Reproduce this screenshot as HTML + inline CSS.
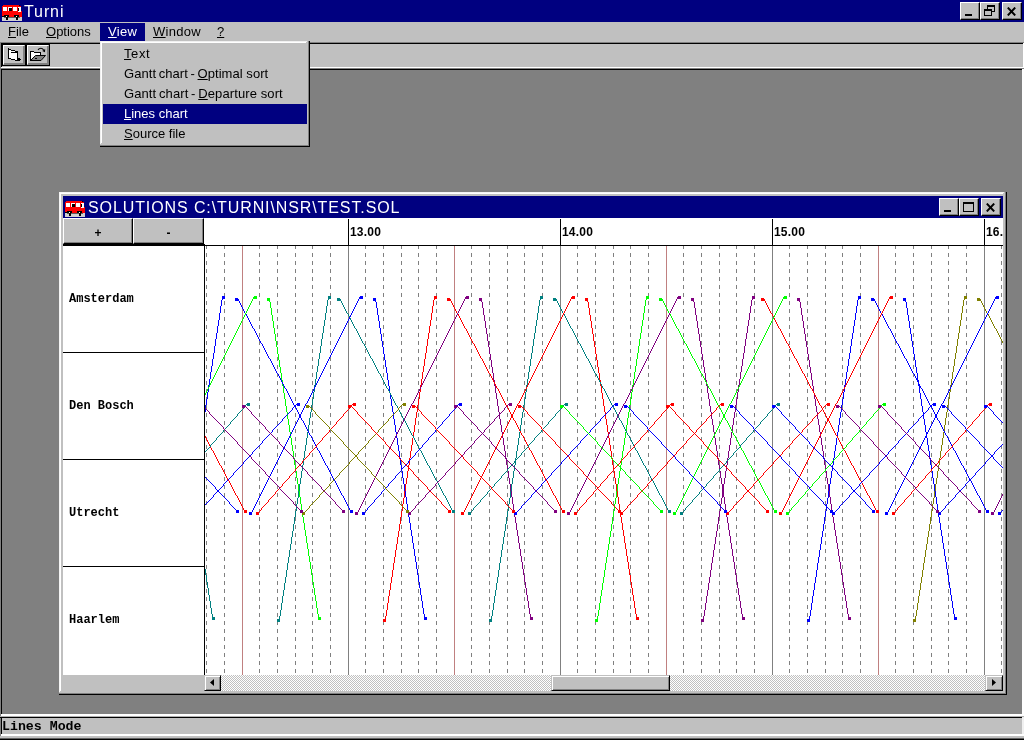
<!DOCTYPE html>
<html><head><meta charset="utf-8"><title>Turni</title>
<style>
html,body{margin:0;padding:0}
body{width:1024px;height:740px;position:relative;overflow:hidden;background:#808080;font-family:"Liberation Sans",sans-serif;font-size:13px;color:#000}
div,i,span,svg{position:absolute;display:block}
.title,.mi,.dd,.st,.hl,.pb,.mono{will-change:transform}
u{text-decoration:underline;text-decoration-thickness:1px;text-underline-offset:1px;text-decoration-skip-ink:none}
.navy{background:#000080}
.face{background:#c0c0c0}
.cb{width:20px;height:18px;background:#c0c0c0;box-sizing:border-box;border:1px solid;border-color:#fff #000 #000 #fff;box-shadow:inset -1px -1px 0 #808080}
.cb i{position:absolute}
.bus{position:absolute}
.title{color:#fff;font-size:16px;line-height:22px;white-space:nowrap}
.mi{top:22px;height:20px;line-height:19px;font-size:13px;white-space:nowrap}
.dd{left:124px;font-size:13px;line-height:20px;height:20px;white-space:nowrap}
.tb{width:24px;height:22px;box-sizing:border-box;border:1px solid #000;background:#c0c0c0}
.tb:before{content:"";position:absolute;left:0;top:0;right:0;bottom:0;border:1px solid;border-color:#fff #808080 #808080 #fff;box-shadow:inset -1px -1px 0 #808080}
.st{left:69px;font-family:"Liberation Mono",monospace;font-weight:bold;font-size:12px;line-height:14px;white-space:nowrap}
.hl{font-weight:bold;font-size:12px;line-height:14px;top:225px;letter-spacing:0.2px}
.pb{top:218px;height:26px;box-sizing:border-box;background:#c0c0c0;border:1px solid;border-color:#fff #000 #000 #fff;box-shadow:inset -1px -1px 0 #808080;text-align:center;font-weight:bold;font-size:12px;line-height:28px}
.sb{top:675px;height:16px;width:17px;box-sizing:border-box;background:#c0c0c0;border:1px solid;border-color:#c0c0c0 #000 #000 #c0c0c0;box-shadow:inset 1px 1px 0 #fff, inset -1px -1px 0 #808080}
</style></head><body>

<!-- main title bar -->
<div class="navy" style="left:0;top:0;width:1024px;height:22px"></div>
<div style="left:2px;top:5px;width:20px;height:16px"><svg class="bus" width="20" height="16" viewBox="0 0 20 16" shape-rendering="crispEdges">
<rect x="0" y="12" width="20" height="4" fill="#d0d0d0"/>
<rect x="1" y="0" width="17" height="2" fill="#ff0000"/>
<rect x="0" y="1" width="19" height="6" fill="#ff0000"/>
<rect x="0" y="6" width="20" height="6" fill="#ff0000"/>
<rect x="1" y="2" width="4" height="4" fill="#fff"/>
<rect x="6" y="2" width="4" height="4" fill="#fff"/>
<rect x="11" y="2" width="4" height="4" fill="#fff"/>
<rect x="16" y="2" width="3" height="5" fill="#fff"/>
<rect x="7" y="3" width="3" height="3" fill="#000"/>
<rect x="16" y="3" width="1" height="3" fill="#000"/>
<rect x="17" y="0" width="1" height="1" fill="#000"/>
<rect x="2" y="10" width="5" height="2" fill="#000"/>
<rect x="12" y="10" width="5" height="2" fill="#000"/>
<rect x="0" y="11" width="2" height="1" fill="#000"/>
<rect x="4" y="11" width="1" height="1" fill="#fff"/>
<rect x="14" y="11" width="1" height="1" fill="#fff"/>
<rect x="4" y="12" width="2" height="3" fill="#000"/>
<rect x="14" y="12" width="2" height="3" fill="#000"/>
<rect x="2" y="12" width="16" height="1" fill="#000" opacity="0.55"/>
</svg></div>
<div class="title" style="left:24px;top:1px;letter-spacing:0.9px">Turni</div>
<div class="cb" style="left:960px;top:2px"><i style="left:4px;top:11px;width:7px;height:2px;background:#000"></i></div>
<div class="cb" style="left:980px;top:2px"><i style="left:6px;top:2px;width:8px;height:7px;border:1px solid #000;border-top-width:2px;box-sizing:border-box"></i><i style="left:3px;top:6px;width:8px;height:7px;border:1px solid #000;border-top-width:2px;box-sizing:border-box;background:#c0c0c0"></i></div>
<div class="cb" style="left:1002px;top:2px"><svg style="position:absolute;left:4px;top:4px" width="9" height="9" viewBox="0 0 9 9"><path d="M0.8 0.6 L8.2 8.4 M8.2 0.6 L0.8 8.4" stroke="#000" stroke-width="2" fill="none"/></svg></div>

<!-- menu bar -->
<div class="face" style="left:0;top:22px;width:1024px;height:20px"></div>
<div class="mi" style="left:8px"><u>F</u>ile</div>
<div class="mi" style="left:46px"><u>O</u>ptions</div>
<div class="navy" style="left:100px;top:23px;width:45px;height:18px"></div>
<div class="mi" style="left:108px;color:#fff;letter-spacing:0.3px"><u>V</u>iew</div>
<div class="mi" style="left:153px;letter-spacing:0.3px"><u>W</u>indow</div>
<div class="mi" style="left:217px"><u>?</u></div>

<!-- toolbar -->
<div style="left:0;top:42px;width:1024px;height:1px;background:#808080"></div>
<div style="left:0;top:43px;width:1023px;height:1px;background:#000"></div>
<div class="face" style="left:2px;top:44px;width:1021px;height:23px"></div>
<div style="left:1px;top:67px;width:1023px;height:1px;background:#fff"></div>
<div style="left:1023px;top:43px;width:1px;height:25px;background:#fff"></div>
<div style="left:0;top:68px;width:1024px;height:1px;background:#808080"></div>
<div style="left:1px;top:69px;width:1022px;height:1px;background:#000"></div>
<div style="left:0;top:42px;width:1px;height:697px;background:#808080"></div>
<div style="left:1px;top:43px;width:1px;height:24px;background:#000"></div>
<div style="left:1px;top:69px;width:1px;height:645px;background:#000"></div>
<div style="left:1022px;top:69px;width:2px;height:647px;background:#fff"></div>
<div class="tb" style="left:2px;top:44px"></div>
<div class="tb" style="left:26px;top:44px"></div>
<svg style="left:0;top:44px" width="52" height="24" viewBox="0 44 52 24">
<g shape-rendering="crispEdges">
<polygon points="9,50 17,52 17,60 15,60 11,59 9,58" fill="#fff"/>
<rect x="8" y="48" width="1" height="11"/>
<rect x="9" y="49" width="2" height="1"/>
<rect x="11" y="50" width="4" height="1"/>
<rect x="15" y="51" width="3" height="1"/>
<rect x="11" y="52" width="6" height="1"/>
<rect x="17" y="51" width="1" height="10"/>
<rect x="8" y="58" width="3" height="1"/>
<rect x="11" y="59" width="4" height="1"/>
<rect x="15" y="60" width="3" height="1"/>
<rect x="18" y="58" width="2" height="2"/>
<rect x="20" y="59" width="1" height="1"/>
<rect x="18" y="60" width="2" height="1"/>
<polygon points="31,52 34,52 34,53 40,53 40,55 35,55 31,59.5" fill="#fff"/>
<rect x="30" y="51" width="4" height="1"/>
<rect x="30" y="51" width="1" height="10"/>
<rect x="34" y="52" width="6" height="1"/>
<rect x="40" y="52" width="1" height="3"/>
</g>
<polygon points="35.5,55.5 45.5,55.5 41,60.5 30.5,60.5" fill="#808080" stroke="#000" stroke-width="1"/>
<rect x="35" y="58" width="2" height="1" shape-rendering="crispEdges"/>
<path d="M38 49.7 Q41 46.8 43.6 49.8" stroke="#000" stroke-width="1.2" fill="none"/>
<polygon points="42.2,50.9 45.2,48.9 45,52.2" fill="#000"/>
</svg>

<!-- status bar -->
<div style="left:1px;top:714px;width:1023px;height:2px;background:#fff"></div>
<div style="left:0;top:716px;width:1024px;height:1px;background:#b0b0b0"></div>
<div style="left:0;top:717px;width:1022px;height:1px;background:#000"></div>
<div class="face" style="left:2px;top:718px;width:1020px;height:16px"></div>
<div style="left:1px;top:717px;width:1px;height:18px;background:#000"></div>
<div style="left:1022px;top:717px;width:2px;height:19px;background:#f0f0f0"></div>
<div style="left:1px;top:734px;width:1023px;height:2px;background:#fff"></div>
<div style="left:0;top:736px;width:1024px;height:2px;background:#c0c0c0"></div>
<div style="left:0;top:738px;width:1024px;height:1px;background:#606060"></div>
<div style="left:0;top:739px;width:1024px;height:1px;background:#000"></div>
<div class="mono" style="left:2px;top:719px;font-family:'Liberation Mono',monospace;font-weight:bold;font-size:13.25px;line-height:16px;white-space:nowrap">Lines Mode</div>

<!-- child window -->
<div style="left:59px;top:192px;width:948px;height:503px;background:#000"></div>
<div style="left:59px;top:192px;width:947px;height:502px;background:#808080"></div>
<div class="face" style="left:59px;top:192px;width:946px;height:501px"></div>
<div style="left:59px;top:192px;width:945px;height:1px;background:#f4f4f4"></div>
<div style="left:59px;top:192px;width:1px;height:500px;background:#f4f4f4"></div>
<div style="left:60px;top:193px;width:943px;height:1px;background:#fff"></div>
<div style="left:60px;top:193px;width:1px;height:498px;background:#fff"></div>
<div class="navy" style="left:63px;top:196px;width:940px;height:22px"></div>
<div style="left:65px;top:201px;width:20px;height:16px"><svg class="bus" width="20" height="16" viewBox="0 0 20 16" shape-rendering="crispEdges">
<rect x="0" y="12" width="20" height="4" fill="#d0d0d0"/>
<rect x="1" y="0" width="17" height="2" fill="#ff0000"/>
<rect x="0" y="1" width="19" height="6" fill="#ff0000"/>
<rect x="0" y="6" width="20" height="6" fill="#ff0000"/>
<rect x="1" y="2" width="4" height="4" fill="#fff"/>
<rect x="6" y="2" width="4" height="4" fill="#fff"/>
<rect x="11" y="2" width="4" height="4" fill="#fff"/>
<rect x="16" y="2" width="3" height="5" fill="#fff"/>
<rect x="7" y="3" width="3" height="3" fill="#000"/>
<rect x="16" y="3" width="1" height="3" fill="#000"/>
<rect x="17" y="0" width="1" height="1" fill="#000"/>
<rect x="2" y="10" width="5" height="2" fill="#000"/>
<rect x="12" y="10" width="5" height="2" fill="#000"/>
<rect x="0" y="11" width="2" height="1" fill="#000"/>
<rect x="4" y="11" width="1" height="1" fill="#fff"/>
<rect x="14" y="11" width="1" height="1" fill="#fff"/>
<rect x="4" y="12" width="2" height="3" fill="#000"/>
<rect x="14" y="12" width="2" height="3" fill="#000"/>
<rect x="2" y="12" width="16" height="1" fill="#000" opacity="0.55"/>
</svg></div>
<div class="title" style="left:88px;top:197px;letter-spacing:0.9px" id="ct">SOLUTIONS C:\TURNI\NSR\TEST.SOL</div>
<div class="cb" style="left:939px;top:198px"><i style="left:4px;top:11px;width:7px;height:2px;background:#000"></i></div>
<div class="cb" style="left:959px;top:198px"><i style="left:3px;top:3px;width:11px;height:10px;border:1px solid #000;border-top-width:2px;box-sizing:border-box"></i></div>
<div class="cb" style="left:981px;top:198px"><svg style="position:absolute;left:4px;top:4px" width="9" height="9" viewBox="0 0 9 9"><path d="M0.8 0.6 L8.2 8.4 M8.2 0.6 L0.8 8.4" stroke="#000" stroke-width="2" fill="none"/></svg></div>
<!-- client -->
<div style="left:63px;top:218px;width:940px;height:457px;background:#fff"></div>
<div class="pb" style="left:63px;width:70px">+</div>
<div class="pb" style="left:133px;width:71px">-</div>
<div style="left:63px;top:244px;width:142px;height:2px;background:#000"></div>
<div style="left:204px;top:245px;width:799px;height:1px;background:#000"></div>
<div style="left:204px;top:244px;width:1px;height:431px;background:#000"></div>
<div style="left:63px;top:352px;width:141px;height:1px;background:#000"></div>
<div style="left:63px;top:459px;width:141px;height:1px;background:#000"></div>
<div style="left:63px;top:566px;width:141px;height:1px;background:#000"></div>
<div class="st" style="top:292px">Amsterdam</div>
<div class="st" style="top:399px">Den Bosch</div>
<div class="st" style="top:506px">Utrecht</div>
<div class="st" style="top:613px">Haarlem</div>
<!-- hour ticks & labels -->
<div style="left:348px;top:219px;width:1px;height:27px;background:#000"></div>
<div style="left:560px;top:219px;width:1px;height:27px;background:#000"></div>
<div style="left:772px;top:219px;width:1px;height:27px;background:#000"></div>
<div style="left:984px;top:219px;width:1px;height:27px;background:#000"></div>
<div class="hl" style="left:350px">13.00</div>
<div class="hl" style="left:562px">14.00</div>
<div class="hl" style="left:774px">15.00</div>
<div class="hl" style="left:986px;width:17px;overflow:hidden">16.00</div>
<svg class="chart" style="position:absolute;left:205px;top:246px" width="798" height="429" viewBox="205 246 798 429" shape-rendering="crispEdges">
<line x1="206.5" y1="245" x2="206.5" y2="675" stroke="#808080" stroke-width="1" stroke-dasharray="4 4"/>
<line x1="224.5" y1="245" x2="224.5" y2="675" stroke="#808080" stroke-width="1" stroke-dasharray="4 4"/>
<rect x="242" y="246" width="1" height="429" fill="#c08080"/>
<line x1="259.5" y1="245" x2="259.5" y2="675" stroke="#808080" stroke-width="1" stroke-dasharray="4 4"/>
<line x1="277.5" y1="245" x2="277.5" y2="675" stroke="#808080" stroke-width="1" stroke-dasharray="4 4"/>
<line x1="295.5" y1="245" x2="295.5" y2="675" stroke="#808080" stroke-width="1" stroke-dasharray="4 4"/>
<line x1="312.5" y1="245" x2="312.5" y2="675" stroke="#808080" stroke-width="1" stroke-dasharray="4 4"/>
<line x1="330.5" y1="245" x2="330.5" y2="675" stroke="#808080" stroke-width="1" stroke-dasharray="4 4"/>
<rect x="348" y="246" width="1" height="429" fill="#808080"/>
<line x1="365.5" y1="245" x2="365.5" y2="675" stroke="#808080" stroke-width="1" stroke-dasharray="4 4"/>
<line x1="383.5" y1="245" x2="383.5" y2="675" stroke="#808080" stroke-width="1" stroke-dasharray="4 4"/>
<line x1="401.5" y1="245" x2="401.5" y2="675" stroke="#808080" stroke-width="1" stroke-dasharray="4 4"/>
<line x1="418.5" y1="245" x2="418.5" y2="675" stroke="#808080" stroke-width="1" stroke-dasharray="4 4"/>
<line x1="436.5" y1="245" x2="436.5" y2="675" stroke="#808080" stroke-width="1" stroke-dasharray="4 4"/>
<rect x="454" y="246" width="1" height="429" fill="#c08080"/>
<line x1="471.5" y1="245" x2="471.5" y2="675" stroke="#808080" stroke-width="1" stroke-dasharray="4 4"/>
<line x1="489.5" y1="245" x2="489.5" y2="675" stroke="#808080" stroke-width="1" stroke-dasharray="4 4"/>
<line x1="507.5" y1="245" x2="507.5" y2="675" stroke="#808080" stroke-width="1" stroke-dasharray="4 4"/>
<line x1="524.5" y1="245" x2="524.5" y2="675" stroke="#808080" stroke-width="1" stroke-dasharray="4 4"/>
<line x1="542.5" y1="245" x2="542.5" y2="675" stroke="#808080" stroke-width="1" stroke-dasharray="4 4"/>
<rect x="560" y="246" width="1" height="429" fill="#808080"/>
<line x1="577.5" y1="245" x2="577.5" y2="675" stroke="#808080" stroke-width="1" stroke-dasharray="4 4"/>
<line x1="595.5" y1="245" x2="595.5" y2="675" stroke="#808080" stroke-width="1" stroke-dasharray="4 4"/>
<line x1="613.5" y1="245" x2="613.5" y2="675" stroke="#808080" stroke-width="1" stroke-dasharray="4 4"/>
<line x1="630.5" y1="245" x2="630.5" y2="675" stroke="#808080" stroke-width="1" stroke-dasharray="4 4"/>
<line x1="648.5" y1="245" x2="648.5" y2="675" stroke="#808080" stroke-width="1" stroke-dasharray="4 4"/>
<rect x="666" y="246" width="1" height="429" fill="#c08080"/>
<line x1="683.5" y1="245" x2="683.5" y2="675" stroke="#808080" stroke-width="1" stroke-dasharray="4 4"/>
<line x1="701.5" y1="245" x2="701.5" y2="675" stroke="#808080" stroke-width="1" stroke-dasharray="4 4"/>
<line x1="719.5" y1="245" x2="719.5" y2="675" stroke="#808080" stroke-width="1" stroke-dasharray="4 4"/>
<line x1="736.5" y1="245" x2="736.5" y2="675" stroke="#808080" stroke-width="1" stroke-dasharray="4 4"/>
<line x1="754.5" y1="245" x2="754.5" y2="675" stroke="#808080" stroke-width="1" stroke-dasharray="4 4"/>
<rect x="772" y="246" width="1" height="429" fill="#808080"/>
<line x1="789.5" y1="245" x2="789.5" y2="675" stroke="#808080" stroke-width="1" stroke-dasharray="4 4"/>
<line x1="807.5" y1="245" x2="807.5" y2="675" stroke="#808080" stroke-width="1" stroke-dasharray="4 4"/>
<line x1="825.5" y1="245" x2="825.5" y2="675" stroke="#808080" stroke-width="1" stroke-dasharray="4 4"/>
<line x1="842.5" y1="245" x2="842.5" y2="675" stroke="#808080" stroke-width="1" stroke-dasharray="4 4"/>
<line x1="860.5" y1="245" x2="860.5" y2="675" stroke="#808080" stroke-width="1" stroke-dasharray="4 4"/>
<rect x="878" y="246" width="1" height="429" fill="#c08080"/>
<line x1="895.5" y1="245" x2="895.5" y2="675" stroke="#808080" stroke-width="1" stroke-dasharray="4 4"/>
<line x1="913.5" y1="245" x2="913.5" y2="675" stroke="#808080" stroke-width="1" stroke-dasharray="4 4"/>
<line x1="931.5" y1="245" x2="931.5" y2="675" stroke="#808080" stroke-width="1" stroke-dasharray="4 4"/>
<line x1="948.5" y1="245" x2="948.5" y2="675" stroke="#808080" stroke-width="1" stroke-dasharray="4 4"/>
<line x1="966.5" y1="245" x2="966.5" y2="675" stroke="#808080" stroke-width="1" stroke-dasharray="4 4"/>
<rect x="984" y="246" width="1" height="429" fill="#808080"/>
<line x1="1001.5" y1="245" x2="1001.5" y2="675" stroke="#808080" stroke-width="1" stroke-dasharray="4 4"/>
<g fill="none" stroke-width="1">
<path transform="translate(.5 0)" stroke="#0000ff" d="M205 405v7m1-13v6m1-13v7m1-14v7m1-13v6m1-13v7m1-13v6m1-13v7m1-13v6m1-13v7m1-14v7m1-13v6m1-13v7m1-13v6m1-13v7m1-14v7m1-13v6m1-10v4"/>
<path transform="translate(.5 0)" stroke="#008080" d="M279 616v4m1-10v6m1-13v7m1-14v7m1-13v6m1-13v7m1-13v6m1-13v7m1-14v7m1-13v6m1-13v7m1-13v6m1-13v7m1-13v6m1-13v7m1-14v7m1-13v6m1-13v7m1-13v6m1-13v7m1-14v7m1-13v6m1-13v7m1-13v6m1-13v7m1-14v7m1-13v6m1-13v7m1-13v6m1-13v7m1-14v7m1-13v6m1-13v7m1-13v6m1-13v7m1-14v7m1-13v6m1-13v7m1-13v6m1-13v7m1-13v6m1-13v7m1-14v7m1-13v6m1-13v7m1-13v6m1-13v7m1-14v7m1-13v6m1-10v4"/>
<path transform="translate(.5 0)" stroke="#ff0000" d="M385 616v4m1-10v6m1-13v7m1-14v7m1-13v6m1-13v7m1-13v6m1-13v7m1-14v7m1-13v6m1-13v7m1-13v6m1-13v7m1-13v6m1-13v7m1-14v7m1-13v6m1-13v7m1-13v6m1-13v7m1-14v7m1-13v6m1-13v7m1-13v6m1-13v7m1-14v7m1-13v6m1-13v7m1-13v6m1-13v7m1-14v7m1-13v6m1-13v7m1-13v6m1-13v7m1-14v7m1-13v6m1-13v7m1-13v6m1-13v7m1-13v6m1-13v7m1-14v7m1-13v6m1-13v7m1-13v6m1-13v7m1-14v7m1-13v6m1-10v4"/>
<path transform="translate(.5 0)" stroke="#008080" d="M491 616v4m1-10v6m1-13v7m1-14v7m1-13v6m1-13v7m1-13v6m1-13v7m1-14v7m1-13v6m1-13v7m1-13v6m1-13v7m1-13v6m1-13v7m1-14v7m1-13v6m1-13v7m1-13v6m1-13v7m1-14v7m1-13v6m1-13v7m1-13v6m1-13v7m1-14v7m1-13v6m1-13v7m1-13v6m1-13v7m1-14v7m1-13v6m1-13v7m1-13v6m1-13v7m1-14v7m1-13v6m1-13v7m1-13v6m1-13v7m1-13v6m1-13v7m1-14v7m1-13v6m1-13v7m1-13v6m1-13v7m1-14v7m1-13v6m1-10v4"/>
<path transform="translate(.5 0)" stroke="#00ff00" d="M597 616v4m1-10v6m1-13v7m1-14v7m1-13v6m1-13v7m1-13v6m1-13v7m1-14v7m1-13v6m1-13v7m1-13v6m1-13v7m1-13v6m1-13v7m1-14v7m1-13v6m1-13v7m1-13v6m1-13v7m1-14v7m1-13v6m1-13v7m1-13v6m1-13v7m1-14v7m1-13v6m1-13v7m1-13v6m1-13v7m1-14v7m1-13v6m1-13v7m1-13v6m1-13v7m1-14v7m1-13v6m1-13v7m1-13v6m1-13v7m1-13v6m1-13v7m1-14v7m1-13v6m1-13v7m1-13v6m1-13v7m1-14v7m1-13v6m1-10v4"/>
<path transform="translate(.5 0)" stroke="#800080" d="M703 616v4m1-10v6m1-13v7m1-14v7m1-13v6m1-13v7m1-13v6m1-13v7m1-14v7m1-13v6m1-13v7m1-13v6m1-13v7m1-13v6m1-13v7m1-14v7m1-13v6m1-13v7m1-13v6m1-13v7m1-14v7m1-13v6m1-13v7m1-13v6m1-13v7m1-14v7m1-13v6m1-13v7m1-13v6m1-13v7m1-14v7m1-13v6m1-13v7m1-13v6m1-13v7m1-14v7m1-13v6m1-13v7m1-13v6m1-13v7m1-13v6m1-13v7m1-14v7m1-13v6m1-13v7m1-13v6m1-13v7m1-14v7m1-13v6m1-10v4"/>
<path transform="translate(.5 0)" stroke="#0000ff" d="M809 616v4m1-10v6m1-13v7m1-14v7m1-13v6m1-13v7m1-13v6m1-13v7m1-14v7m1-13v6m1-13v7m1-13v6m1-13v7m1-13v6m1-13v7m1-14v7m1-13v6m1-13v7m1-13v6m1-13v7m1-14v7m1-13v6m1-13v7m1-13v6m1-13v7m1-14v7m1-13v6m1-13v7m1-13v6m1-13v7m1-14v7m1-13v6m1-13v7m1-13v6m1-13v7m1-14v7m1-13v6m1-13v7m1-13v6m1-13v7m1-13v6m1-13v7m1-14v7m1-13v6m1-13v7m1-13v6m1-13v7m1-14v7m1-13v6m1-10v4"/>
<path transform="translate(.5 0)" stroke="#808000" d="M915 616v4m1-10v6m1-13v7m1-14v7m1-13v6m1-13v7m1-13v6m1-13v7m1-14v7m1-13v6m1-13v7m1-13v6m1-13v7m1-13v6m1-13v7m1-14v7m1-13v6m1-13v7m1-13v6m1-13v7m1-14v7m1-13v6m1-13v7m1-13v6m1-13v7m1-14v7m1-13v6m1-13v7m1-13v6m1-13v7m1-14v7m1-13v6m1-13v7m1-13v6m1-13v7m1-14v7m1-13v6m1-13v7m1-13v6m1-13v7m1-13v6m1-13v7m1-14v7m1-13v6m1-13v7m1-13v6m1-13v7m1-14v7m1-13v6m1-10v4"/>
<path transform="translate(.5 0)" stroke="#008080" d="M205 569v6m1 0v7m1 0v6m1 0v7m1 0v6m1 0v7m1 0v6m1 0v4"/>
<path transform="translate(.5 0)" stroke="#00ff00" d="M269 298v4m1 0v6m1 0v7m1 0v6m1 0v7m1 0v6m1 0v7m1 0v6m1 0v7m1 0v6m1 0v7m1 0v6m1 0v7m1 0v6m1 0v7m1 0v6m1 0v7m1 0v6m1 0v7m1 0v6m1 0v7m1 0v6m1 0v7m1 0v6m1 0v7m1 0v7m1 0v6m1 0v7m1 0v6m1 0v7m1 0v6m1 0v7m1 0v6m1 0v7m1 0v6m1 0v7m1 0v6m1 0v7m1 0v6m1 0v7m1 0v6m1 0v7m1 0v6m1 0v7m1 0v6m1 0v7m1 0v6m1 0v7m1 0v6m1 0v4"/>
<path transform="translate(.5 0)" stroke="#0000ff" d="M375 298v4m1 0v6m1 0v7m1 0v6m1 0v7m1 0v6m1 0v7m1 0v6m1 0v7m1 0v6m1 0v7m1 0v6m1 0v7m1 0v6m1 0v7m1 0v6m1 0v7m1 0v6m1 0v7m1 0v6m1 0v7m1 0v6m1 0v7m1 0v6m1 0v7m1 0v7m1 0v6m1 0v7m1 0v6m1 0v7m1 0v6m1 0v7m1 0v6m1 0v7m1 0v6m1 0v7m1 0v6m1 0v7m1 0v6m1 0v7m1 0v6m1 0v7m1 0v6m1 0v7m1 0v6m1 0v7m1 0v6m1 0v7m1 0v6m1 0v4"/>
<path transform="translate(.5 0)" stroke="#800080" d="M481 298v4m1 0v6m1 0v7m1 0v6m1 0v7m1 0v6m1 0v7m1 0v6m1 0v7m1 0v6m1 0v7m1 0v6m1 0v7m1 0v6m1 0v7m1 0v6m1 0v7m1 0v6m1 0v7m1 0v6m1 0v7m1 0v6m1 0v7m1 0v6m1 0v7m1 0v7m1 0v6m1 0v7m1 0v6m1 0v7m1 0v6m1 0v7m1 0v6m1 0v7m1 0v6m1 0v7m1 0v6m1 0v7m1 0v6m1 0v7m1 0v6m1 0v7m1 0v6m1 0v7m1 0v6m1 0v7m1 0v6m1 0v7m1 0v6m1 0v4"/>
<path transform="translate(.5 0)" stroke="#ff0000" d="M587 298v4m1 0v6m1 0v7m1 0v6m1 0v7m1 0v6m1 0v7m1 0v6m1 0v7m1 0v6m1 0v7m1 0v6m1 0v7m1 0v6m1 0v7m1 0v6m1 0v7m1 0v6m1 0v7m1 0v6m1 0v7m1 0v6m1 0v7m1 0v6m1 0v7m1 0v7m1 0v6m1 0v7m1 0v6m1 0v7m1 0v6m1 0v7m1 0v6m1 0v7m1 0v6m1 0v7m1 0v6m1 0v7m1 0v6m1 0v7m1 0v6m1 0v7m1 0v6m1 0v7m1 0v6m1 0v7m1 0v6m1 0v7m1 0v6m1 0v4"/>
<path transform="translate(.5 0)" stroke="#800080" d="M693 298v4m1 0v6m1 0v7m1 0v6m1 0v7m1 0v6m1 0v7m1 0v6m1 0v7m1 0v6m1 0v7m1 0v6m1 0v7m1 0v6m1 0v7m1 0v6m1 0v7m1 0v6m1 0v7m1 0v6m1 0v7m1 0v6m1 0v7m1 0v6m1 0v7m1 0v7m1 0v6m1 0v7m1 0v6m1 0v7m1 0v6m1 0v7m1 0v6m1 0v7m1 0v6m1 0v7m1 0v6m1 0v7m1 0v6m1 0v7m1 0v6m1 0v7m1 0v6m1 0v7m1 0v6m1 0v7m1 0v6m1 0v7m1 0v6m1 0v4"/>
<path transform="translate(.5 0)" stroke="#800080" d="M799 298v4m1 0v6m1 0v7m1 0v6m1 0v7m1 0v6m1 0v7m1 0v6m1 0v7m1 0v6m1 0v7m1 0v6m1 0v7m1 0v6m1 0v7m1 0v6m1 0v7m1 0v6m1 0v7m1 0v6m1 0v7m1 0v6m1 0v7m1 0v6m1 0v7m1 0v7m1 0v6m1 0v7m1 0v6m1 0v7m1 0v6m1 0v7m1 0v6m1 0v7m1 0v6m1 0v7m1 0v6m1 0v7m1 0v6m1 0v7m1 0v6m1 0v7m1 0v6m1 0v7m1 0v6m1 0v7m1 0v6m1 0v7m1 0v6m1 0v4"/>
<path transform="translate(.5 0)" stroke="#0000ff" d="M905 298v4m1 0v6m1 0v7m1 0v6m1 0v7m1 0v6m1 0v7m1 0v6m1 0v7m1 0v6m1 0v7m1 0v6m1 0v7m1 0v6m1 0v7m1 0v6m1 0v7m1 0v6m1 0v7m1 0v6m1 0v7m1 0v6m1 0v7m1 0v6m1 0v7m1 0v7m1 0v6m1 0v7m1 0v6m1 0v7m1 0v6m1 0v7m1 0v6m1 0v7m1 0v6m1 0v7m1 0v6m1 0v7m1 0v6m1 0v7m1 0v6m1 0v7m1 0v6m1 0v7m1 0v6m1 0v7m1 0v6m1 0v7m1 0v6m1 0v4"/>
<path transform="translate(.5 0)" stroke="#ff0000" d="M205 436v2m1 0v2m1 0v2m1 0v2m1 0v2m1 0v2m1 0v2m1 0v1m1 0v2m1 0v2m1 0v2m1 0v2m1 0v2m1 0v2m1 0v2m1 0v1m1 0v2m1 0v2m1 0v2m1 0v2m1 0v2m1 0v2m1 0v2m1 0v1m1 0v2m1 0v2m1 0v2m1 0v2m1 0v2m1 0v2m1 0v2m1 0v1m1 0v2m1 0v2m1 0v2m1 0v2m1 0v2m1 0v2m1 0v2m1 0v1"/>
<path transform="translate(.5 0)" stroke="#0000ff" d="M237 298v1m1 0v2m1 0v2m1 0v2m1 0v2m1 0v2m1 0v2m1 0v2m1 0v1m1 0v2m1 0v2m1 0v2m1 0v2m1 0v2m1 0v2m1 0v2m1 0v1m1 0v2m1 0v2m1 0v2m1 0v2m1 0v2m1 0v2m1 0v2m1 0v1m1 0v2m1 0v2m1 0v2m1 0v2m1 0v2m1 0v2m1 0v2m1 0v1m1 0v2m1 0v2m1 0v2m1 0v2m1 0v2m1 0v2m1 0v2m1 0v1m1 0v2m1 0v2m1 0v2m1 0v2m1 0v2m1 0v2m1 0v2m1 0v1m1 0v2m1 0v2m1 0v2m1 0v2m1 0v2m1 0v2m1 0v2m1 0v2m1 0v1m1 0v2m1 0v2m1 0v2m1 0v2m1 0v2m1 0v2m1 0v2m1 0v1m1 0v2m1 0v2m1 0v2m1 0v2m1 0v2m1 0v2m1 0v2m1 0v1m1 0v2m1 0v2m1 0v2m1 0v2m1 0v2m1 0v2m1 0v2m1 0v1m1 0v2m1 0v2m1 0v2m1 0v2m1 0v2m1 0v2m1 0v2m1 0v1m1 0v2m1 0v2m1 0v2m1 0v2m1 0v2m1 0v2m1 0v2m1 0v1m1 0v2m1 0v2m1 0v2m1 0v2m1 0v2m1 0v2m1 0v2m1 0v1m1 0v2m1 0v2m1 0v2m1 0v2m1 0v2m1 0v2m1 0v2m1 0v1"/>
<path transform="translate(.5 0)" stroke="#008080" d="M339 298v1m1 0v2m1 0v2m1 0v2m1 0v2m1 0v2m1 0v2m1 0v2m1 0v1m1 0v2m1 0v2m1 0v2m1 0v2m1 0v2m1 0v2m1 0v2m1 0v1m1 0v2m1 0v2m1 0v2m1 0v2m1 0v2m1 0v2m1 0v2m1 0v1m1 0v2m1 0v2m1 0v2m1 0v2m1 0v2m1 0v2m1 0v2m1 0v1m1 0v2m1 0v2m1 0v2m1 0v2m1 0v2m1 0v2m1 0v2m1 0v1m1 0v2m1 0v2m1 0v2m1 0v2m1 0v2m1 0v2m1 0v2m1 0v1m1 0v2m1 0v2m1 0v2m1 0v2m1 0v2m1 0v2m1 0v2m1 0v2m1 0v1m1 0v2m1 0v2m1 0v2m1 0v2m1 0v2m1 0v2m1 0v2m1 0v1m1 0v2m1 0v2m1 0v2m1 0v2m1 0v2m1 0v2m1 0v2m1 0v1m1 0v2m1 0v2m1 0v2m1 0v2m1 0v2m1 0v2m1 0v2m1 0v1m1 0v2m1 0v2m1 0v2m1 0v2m1 0v2m1 0v2m1 0v2m1 0v1m1 0v2m1 0v2m1 0v2m1 0v2m1 0v2m1 0v2m1 0v2m1 0v1m1 0v2m1 0v2m1 0v2m1 0v2m1 0v2m1 0v2m1 0v2m1 0v1m1 0v2m1 0v2m1 0v2m1 0v2m1 0v2m1 0v2m1 0v2m1 0v1"/>
<path transform="translate(.5 0)" stroke="#ff0000" d="M449 298v1m1 0v2m1 0v2m1 0v2m1 0v2m1 0v2m1 0v2m1 0v2m1 0v1m1 0v2m1 0v2m1 0v2m1 0v2m1 0v2m1 0v2m1 0v2m1 0v1m1 0v2m1 0v2m1 0v2m1 0v2m1 0v2m1 0v2m1 0v2m1 0v1m1 0v2m1 0v2m1 0v2m1 0v2m1 0v2m1 0v2m1 0v2m1 0v1m1 0v2m1 0v2m1 0v2m1 0v2m1 0v2m1 0v2m1 0v2m1 0v1m1 0v2m1 0v2m1 0v2m1 0v2m1 0v2m1 0v2m1 0v2m1 0v1m1 0v2m1 0v2m1 0v2m1 0v2m1 0v2m1 0v2m1 0v2m1 0v2m1 0v1m1 0v2m1 0v2m1 0v2m1 0v2m1 0v2m1 0v2m1 0v2m1 0v1m1 0v2m1 0v2m1 0v2m1 0v2m1 0v2m1 0v2m1 0v2m1 0v1m1 0v2m1 0v2m1 0v2m1 0v2m1 0v2m1 0v2m1 0v2m1 0v1m1 0v2m1 0v2m1 0v2m1 0v2m1 0v2m1 0v2m1 0v2m1 0v1m1 0v2m1 0v2m1 0v2m1 0v2m1 0v2m1 0v2m1 0v2m1 0v1m1 0v2m1 0v2m1 0v2m1 0v2m1 0v2m1 0v2m1 0v2m1 0v1m1 0v2m1 0v2m1 0v2m1 0v2m1 0v2m1 0v2m1 0v2m1 0v1"/>
<path transform="translate(.5 0)" stroke="#008080" d="M555 298v1m1 0v2m1 0v2m1 0v2m1 0v2m1 0v2m1 0v2m1 0v2m1 0v1m1 0v2m1 0v2m1 0v2m1 0v2m1 0v2m1 0v2m1 0v2m1 0v1m1 0v2m1 0v2m1 0v2m1 0v2m1 0v2m1 0v2m1 0v2m1 0v1m1 0v2m1 0v2m1 0v2m1 0v2m1 0v2m1 0v2m1 0v2m1 0v1m1 0v2m1 0v2m1 0v2m1 0v2m1 0v2m1 0v2m1 0v2m1 0v1m1 0v2m1 0v2m1 0v2m1 0v2m1 0v2m1 0v2m1 0v2m1 0v1m1 0v2m1 0v2m1 0v2m1 0v2m1 0v2m1 0v2m1 0v2m1 0v2m1 0v1m1 0v2m1 0v2m1 0v2m1 0v2m1 0v2m1 0v2m1 0v2m1 0v1m1 0v2m1 0v2m1 0v2m1 0v2m1 0v2m1 0v2m1 0v2m1 0v1m1 0v2m1 0v2m1 0v2m1 0v2m1 0v2m1 0v2m1 0v2m1 0v1m1 0v2m1 0v2m1 0v2m1 0v2m1 0v2m1 0v2m1 0v2m1 0v1m1 0v2m1 0v2m1 0v2m1 0v2m1 0v2m1 0v2m1 0v2m1 0v1m1 0v2m1 0v2m1 0v2m1 0v2m1 0v2m1 0v2m1 0v2m1 0v1m1 0v2m1 0v2m1 0v2m1 0v2m1 0v2m1 0v2m1 0v2m1 0v1"/>
<path transform="translate(.5 0)" stroke="#00ff00" d="M661 298v1m1 0v2m1 0v2m1 0v2m1 0v2m1 0v2m1 0v2m1 0v2m1 0v1m1 0v2m1 0v2m1 0v2m1 0v2m1 0v2m1 0v2m1 0v2m1 0v1m1 0v2m1 0v2m1 0v2m1 0v2m1 0v2m1 0v2m1 0v2m1 0v1m1 0v2m1 0v2m1 0v2m1 0v2m1 0v2m1 0v2m1 0v2m1 0v1m1 0v2m1 0v2m1 0v2m1 0v2m1 0v2m1 0v2m1 0v2m1 0v1m1 0v2m1 0v2m1 0v2m1 0v2m1 0v2m1 0v2m1 0v2m1 0v1m1 0v2m1 0v2m1 0v2m1 0v2m1 0v2m1 0v2m1 0v2m1 0v2m1 0v1m1 0v2m1 0v2m1 0v2m1 0v2m1 0v2m1 0v2m1 0v2m1 0v1m1 0v2m1 0v2m1 0v2m1 0v2m1 0v2m1 0v2m1 0v2m1 0v1m1 0v2m1 0v2m1 0v2m1 0v2m1 0v2m1 0v2m1 0v2m1 0v1m1 0v2m1 0v2m1 0v2m1 0v2m1 0v2m1 0v2m1 0v2m1 0v1m1 0v2m1 0v2m1 0v2m1 0v2m1 0v2m1 0v2m1 0v2m1 0v1m1 0v2m1 0v2m1 0v2m1 0v2m1 0v2m1 0v2m1 0v2m1 0v1m1 0v2m1 0v2m1 0v2m1 0v2m1 0v2m1 0v2m1 0v2m1 0v1"/>
<path transform="translate(.5 0)" stroke="#ff0000" d="M763 298v1m1 0v2m1 0v2m1 0v2m1 0v2m1 0v2m1 0v2m1 0v2m1 0v1m1 0v2m1 0v2m1 0v2m1 0v2m1 0v2m1 0v2m1 0v2m1 0v1m1 0v2m1 0v2m1 0v2m1 0v2m1 0v2m1 0v2m1 0v2m1 0v1m1 0v2m1 0v2m1 0v2m1 0v2m1 0v2m1 0v2m1 0v2m1 0v1m1 0v2m1 0v2m1 0v2m1 0v2m1 0v2m1 0v2m1 0v2m1 0v1m1 0v2m1 0v2m1 0v2m1 0v2m1 0v2m1 0v2m1 0v2m1 0v1m1 0v2m1 0v2m1 0v2m1 0v2m1 0v2m1 0v2m1 0v2m1 0v2m1 0v1m1 0v2m1 0v2m1 0v2m1 0v2m1 0v2m1 0v2m1 0v2m1 0v1m1 0v2m1 0v2m1 0v2m1 0v2m1 0v2m1 0v2m1 0v2m1 0v1m1 0v2m1 0v2m1 0v2m1 0v2m1 0v2m1 0v2m1 0v2m1 0v1m1 0v2m1 0v2m1 0v2m1 0v2m1 0v2m1 0v2m1 0v2m1 0v1m1 0v2m1 0v2m1 0v2m1 0v2m1 0v2m1 0v2m1 0v2m1 0v1m1 0v2m1 0v2m1 0v2m1 0v2m1 0v2m1 0v2m1 0v2m1 0v1m1 0v2m1 0v2m1 0v2m1 0v2m1 0v2m1 0v2m1 0v2m1 0v1"/>
<path transform="translate(.5 0)" stroke="#0000ff" d="M873 298v1m1 0v2m1 0v2m1 0v2m1 0v2m1 0v2m1 0v2m1 0v2m1 0v1m1 0v2m1 0v2m1 0v2m1 0v2m1 0v2m1 0v2m1 0v2m1 0v1m1 0v2m1 0v2m1 0v2m1 0v2m1 0v2m1 0v2m1 0v2m1 0v1m1 0v2m1 0v2m1 0v2m1 0v2m1 0v2m1 0v2m1 0v2m1 0v1m1 0v2m1 0v2m1 0v2m1 0v2m1 0v2m1 0v2m1 0v2m1 0v1m1 0v2m1 0v2m1 0v2m1 0v2m1 0v2m1 0v2m1 0v2m1 0v1m1 0v2m1 0v2m1 0v2m1 0v2m1 0v2m1 0v2m1 0v2m1 0v2m1 0v1m1 0v2m1 0v2m1 0v2m1 0v2m1 0v2m1 0v2m1 0v2m1 0v1m1 0v2m1 0v2m1 0v2m1 0v2m1 0v2m1 0v2m1 0v2m1 0v1m1 0v2m1 0v2m1 0v2m1 0v2m1 0v2m1 0v2m1 0v2m1 0v1m1 0v2m1 0v2m1 0v2m1 0v2m1 0v2m1 0v2m1 0v2m1 0v1m1 0v2m1 0v2m1 0v2m1 0v2m1 0v2m1 0v2m1 0v2m1 0v1m1 0v2m1 0v2m1 0v2m1 0v2m1 0v2m1 0v2m1 0v2m1 0v1m1 0v2m1 0v2m1 0v2m1 0v2m1 0v2m1 0v2m1 0v2m1 0v1"/>
<path transform="translate(.5 0)" stroke="#808000" d="M979 298v1m1 0v2m1 0v2m1 0v2m1 0v2m1 0v2m1 0v2m1 0v2m1 0v1m1 0v2m1 0v2m1 0v2m1 0v2m1 0v2m1 0v2m1 0v2m1 0v1m1 0v2m1 0v2m1 0v2m1 0v2m1 0v2m1 0v2m1 0v2"/>
<path transform="translate(.5 0)" stroke="#00ff00" d="M205 393v2m1-4v2m1-4v2m1-4v2m1-4v2m1-4v2m1-4v2m1-4v2m1-4v2m1-4v2m1-4v2m1-4v2m1-4v2m1-4v2m1-4v2m1-4v2m1-4v2m1-4v2m1-4v2m1-4v2m1-4v2m1-4v2m1-4v2m1-4v2m1-4v2m1-4v2m1-4v2m1-4v2m1-4v2m1-4v2m1-4v2m1-4v2m1-4v2m1-4v2m1-4v2m1-4v2m1-4v2m1-4v2m1-4v2m1-4v2m1-4v2m1-4v2m1-4v2m1-4v2m1-4v2m1-4v2m1-4v2m1-4v2m1-4v2m1-3v1"/>
<path transform="translate(.5 0)" stroke="#0000ff" d="M251 512v1m1-3v2m1-4v2m1-4v2m1-4v2m1-4v2m1-4v2m1-4v2m1-4v2m1-4v2m1-4v2m1-4v2m1-4v2m1-4v2m1-4v2m1-4v2m1-4v2m1-4v2m1-4v2m1-4v2m1-4v2m1-4v2m1-4v2m1-4v2m1-4v2m1-4v2m1-4v2m1-4v2m1-4v2m1-4v2m1-4v2m1-4v2m1-4v2m1-4v2m1-4v2m1-4v2m1-4v2m1-4v2m1-4v2m1-4v2m1-4v2m1-4v2m1-4v2m1-4v2m1-4v2m1-4v2m1-4v2m1-4v2m1-4v2m1-4v2m1-4v2m1-4v2m1-4v2m1-4v2m1-4v2m1-3v1m1-3v2m1-4v2m1-4v2m1-4v2m1-4v2m1-4v2m1-4v2m1-4v2m1-4v2m1-4v2m1-4v2m1-4v2m1-4v2m1-4v2m1-4v2m1-4v2m1-4v2m1-4v2m1-4v2m1-4v2m1-4v2m1-4v2m1-4v2m1-4v2m1-4v2m1-4v2m1-4v2m1-4v2m1-4v2m1-4v2m1-4v2m1-4v2m1-4v2m1-4v2m1-4v2m1-4v2m1-4v2m1-4v2m1-4v2m1-4v2m1-4v2m1-4v2m1-4v2m1-4v2m1-4v2m1-4v2m1-4v2m1-4v2m1-4v2m1-4v2m1-4v2m1-4v2m1-4v2m1-3v1"/>
<path transform="translate(.5 0)" stroke="#800080" d="M357 512v1m1-3v2m1-4v2m1-4v2m1-4v2m1-4v2m1-4v2m1-4v2m1-4v2m1-4v2m1-4v2m1-4v2m1-4v2m1-4v2m1-4v2m1-4v2m1-4v2m1-4v2m1-4v2m1-4v2m1-4v2m1-4v2m1-4v2m1-4v2m1-4v2m1-4v2m1-4v2m1-4v2m1-4v2m1-4v2m1-4v2m1-4v2m1-4v2m1-4v2m1-4v2m1-4v2m1-4v2m1-4v2m1-4v2m1-4v2m1-4v2m1-4v2m1-4v2m1-4v2m1-4v2m1-4v2m1-4v2m1-4v2m1-4v2m1-4v2m1-4v2m1-4v2m1-4v2m1-4v2m1-4v2m1-3v1m1-3v2m1-4v2m1-4v2m1-4v2m1-4v2m1-4v2m1-4v2m1-4v2m1-4v2m1-4v2m1-4v2m1-4v2m1-4v2m1-4v2m1-4v2m1-4v2m1-4v2m1-4v2m1-4v2m1-4v2m1-4v2m1-4v2m1-4v2m1-4v2m1-4v2m1-4v2m1-4v2m1-4v2m1-4v2m1-4v2m1-4v2m1-4v2m1-4v2m1-4v2m1-4v2m1-4v2m1-4v2m1-4v2m1-4v2m1-4v2m1-4v2m1-4v2m1-4v2m1-4v2m1-4v2m1-4v2m1-4v2m1-4v2m1-4v2m1-4v2m1-4v2m1-4v2m1-4v2m1-3v1"/>
<path transform="translate(.5 0)" stroke="#ff0000" d="M463 512v1m1-3v2m1-4v2m1-4v2m1-4v2m1-4v2m1-4v2m1-4v2m1-4v2m1-4v2m1-4v2m1-4v2m1-4v2m1-4v2m1-4v2m1-4v2m1-4v2m1-4v2m1-4v2m1-4v2m1-4v2m1-4v2m1-4v2m1-4v2m1-4v2m1-4v2m1-4v2m1-4v2m1-4v2m1-4v2m1-4v2m1-4v2m1-4v2m1-4v2m1-4v2m1-4v2m1-4v2m1-4v2m1-4v2m1-4v2m1-4v2m1-4v2m1-4v2m1-4v2m1-4v2m1-4v2m1-4v2m1-4v2m1-4v2m1-4v2m1-4v2m1-4v2m1-4v2m1-4v2m1-4v2m1-3v1m1-3v2m1-4v2m1-4v2m1-4v2m1-4v2m1-4v2m1-4v2m1-4v2m1-4v2m1-4v2m1-4v2m1-4v2m1-4v2m1-4v2m1-4v2m1-4v2m1-4v2m1-4v2m1-4v2m1-4v2m1-4v2m1-4v2m1-4v2m1-4v2m1-4v2m1-4v2m1-4v2m1-4v2m1-4v2m1-4v2m1-4v2m1-4v2m1-4v2m1-4v2m1-4v2m1-4v2m1-4v2m1-4v2m1-4v2m1-4v2m1-4v2m1-4v2m1-4v2m1-4v2m1-4v2m1-4v2m1-4v2m1-4v2m1-4v2m1-4v2m1-4v2m1-4v2m1-4v2m1-3v1"/>
<path transform="translate(.5 0)" stroke="#800080" d="M569 512v1m1-3v2m1-4v2m1-4v2m1-4v2m1-4v2m1-4v2m1-4v2m1-4v2m1-4v2m1-4v2m1-4v2m1-4v2m1-4v2m1-4v2m1-4v2m1-4v2m1-4v2m1-4v2m1-4v2m1-4v2m1-4v2m1-4v2m1-4v2m1-4v2m1-4v2m1-4v2m1-4v2m1-4v2m1-4v2m1-4v2m1-4v2m1-4v2m1-4v2m1-4v2m1-4v2m1-4v2m1-4v2m1-4v2m1-4v2m1-4v2m1-4v2m1-4v2m1-4v2m1-4v2m1-4v2m1-4v2m1-4v2m1-4v2m1-4v2m1-4v2m1-4v2m1-4v2m1-4v2m1-4v2m1-3v1m1-3v2m1-4v2m1-4v2m1-4v2m1-4v2m1-4v2m1-4v2m1-4v2m1-4v2m1-4v2m1-4v2m1-4v2m1-4v2m1-4v2m1-4v2m1-4v2m1-4v2m1-4v2m1-4v2m1-4v2m1-4v2m1-4v2m1-4v2m1-4v2m1-4v2m1-4v2m1-4v2m1-4v2m1-4v2m1-4v2m1-4v2m1-4v2m1-4v2m1-4v2m1-4v2m1-4v2m1-4v2m1-4v2m1-4v2m1-4v2m1-4v2m1-4v2m1-4v2m1-4v2m1-4v2m1-4v2m1-4v2m1-4v2m1-4v2m1-4v2m1-4v2m1-4v2m1-4v2m1-3v1"/>
<path transform="translate(.5 0)" stroke="#00ff00" d="M675 512v1m1-3v2m1-4v2m1-4v2m1-4v2m1-4v2m1-4v2m1-4v2m1-4v2m1-4v2m1-4v2m1-4v2m1-4v2m1-4v2m1-4v2m1-4v2m1-4v2m1-4v2m1-4v2m1-4v2m1-4v2m1-4v2m1-4v2m1-4v2m1-4v2m1-4v2m1-4v2m1-4v2m1-4v2m1-4v2m1-4v2m1-4v2m1-4v2m1-4v2m1-4v2m1-4v2m1-4v2m1-4v2m1-4v2m1-4v2m1-4v2m1-4v2m1-4v2m1-4v2m1-4v2m1-4v2m1-4v2m1-4v2m1-4v2m1-4v2m1-4v2m1-4v2m1-4v2m1-4v2m1-4v2m1-3v1m1-3v2m1-4v2m1-4v2m1-4v2m1-4v2m1-4v2m1-4v2m1-4v2m1-4v2m1-4v2m1-4v2m1-4v2m1-4v2m1-4v2m1-4v2m1-4v2m1-4v2m1-4v2m1-4v2m1-4v2m1-4v2m1-4v2m1-4v2m1-4v2m1-4v2m1-4v2m1-4v2m1-4v2m1-4v2m1-4v2m1-4v2m1-4v2m1-4v2m1-4v2m1-4v2m1-4v2m1-4v2m1-4v2m1-4v2m1-4v2m1-4v2m1-4v2m1-4v2m1-4v2m1-4v2m1-4v2m1-4v2m1-4v2m1-4v2m1-4v2m1-4v2m1-4v2m1-4v2m1-3v1"/>
<path transform="translate(.5 0)" stroke="#ff0000" d="M781 512v1m1-3v2m1-4v2m1-4v2m1-4v2m1-4v2m1-4v2m1-4v2m1-4v2m1-4v2m1-4v2m1-4v2m1-4v2m1-4v2m1-4v2m1-4v2m1-4v2m1-4v2m1-4v2m1-4v2m1-4v2m1-4v2m1-4v2m1-4v2m1-4v2m1-4v2m1-4v2m1-4v2m1-4v2m1-4v2m1-4v2m1-4v2m1-4v2m1-4v2m1-4v2m1-4v2m1-4v2m1-4v2m1-4v2m1-4v2m1-4v2m1-4v2m1-4v2m1-4v2m1-4v2m1-4v2m1-4v2m1-4v2m1-4v2m1-4v2m1-4v2m1-4v2m1-4v2m1-4v2m1-4v2m1-3v1m1-3v2m1-4v2m1-4v2m1-4v2m1-4v2m1-4v2m1-4v2m1-4v2m1-4v2m1-4v2m1-4v2m1-4v2m1-4v2m1-4v2m1-4v2m1-4v2m1-4v2m1-4v2m1-4v2m1-4v2m1-4v2m1-4v2m1-4v2m1-4v2m1-4v2m1-4v2m1-4v2m1-4v2m1-4v2m1-4v2m1-4v2m1-4v2m1-4v2m1-4v2m1-4v2m1-4v2m1-4v2m1-4v2m1-4v2m1-4v2m1-4v2m1-4v2m1-4v2m1-4v2m1-4v2m1-4v2m1-4v2m1-4v2m1-4v2m1-4v2m1-4v2m1-4v2m1-4v2m1-3v1"/>
<path transform="translate(.5 0)" stroke="#0000ff" d="M887 512v1m1-3v2m1-4v2m1-4v2m1-4v2m1-4v2m1-4v2m1-4v2m1-4v2m1-4v2m1-4v2m1-4v2m1-4v2m1-4v2m1-4v2m1-4v2m1-4v2m1-4v2m1-4v2m1-4v2m1-4v2m1-4v2m1-4v2m1-4v2m1-4v2m1-4v2m1-4v2m1-4v2m1-4v2m1-4v2m1-4v2m1-4v2m1-4v2m1-4v2m1-4v2m1-4v2m1-4v2m1-4v2m1-4v2m1-4v2m1-4v2m1-4v2m1-4v2m1-4v2m1-4v2m1-4v2m1-4v2m1-4v2m1-4v2m1-4v2m1-4v2m1-4v2m1-4v2m1-4v2m1-4v2m1-3v1m1-3v2m1-4v2m1-4v2m1-4v2m1-4v2m1-4v2m1-4v2m1-4v2m1-4v2m1-4v2m1-4v2m1-4v2m1-4v2m1-4v2m1-4v2m1-4v2m1-4v2m1-4v2m1-4v2m1-4v2m1-4v2m1-4v2m1-4v2m1-4v2m1-4v2m1-4v2m1-4v2m1-4v2m1-4v2m1-4v2m1-4v2m1-4v2m1-4v2m1-4v2m1-4v2m1-4v2m1-4v2m1-4v2m1-4v2m1-4v2m1-4v2m1-4v2m1-4v2m1-4v2m1-4v2m1-4v2m1-4v2m1-4v2m1-4v2m1-4v2m1-4v2m1-4v2m1-4v2m1-3v1"/>
<path transform="translate(.5 0)" stroke="#800080" d="M993 512v1m1-3v2m1-4v2m1-4v2m1-4v2m1-4v2m1-4v2m1-4v2m1-4v2m1-4v2"/>
<path transform="translate(.5 0)" stroke="#008080" d="M205 451v1m1-2v1m1-2v1m1-2v1m1-2v1m1-3v2m1-3v1m1-2v1m1-2v1m1-2v1m1-2v1m1-3v2m1-3v1m1-2v1m1-2v1m1-2v1m1-2v1m1-2v1m1-3v2m1-3v1m1-2v1m1-2v1m1-2v1m1-2v1m1-2v1m1-3v2m1-3v1m1-2v1m1-2v1m1-2v1m1-2v1m1-2v1m1-3v2m1-3v1m1-2v1m1-2v1m1-2v1m1-2v1m1-2v1m1-3v2m1-3v1m1-2v1m1-2v1"/>
<path transform="translate(.5 0)" stroke="#ff0000" d="M258 512v1m1-2v1m1-2v1m1-3v2m1-3v1m1-2v1m1-2v1m1-2v1m1-2v1m1-2v1m1-3v2m1-3v1m1-2v1m1-2v1m1-2v1m1-2v1m1-2v1m1-3v2m1-3v1m1-2v1m1-2v1m1-2v1m1-2v1m1-2v1m1-3v2m1-3v1m1-2v1m1-2v1m1-2v1m1-2v1m1-2v1m1-3v2m1-3v1m1-2v1m1-2v1m1-2v1m1-2v1m1-3v2m1-3v1m1-2v1m1-2v1m1-2v1m1-2v1m1-2v1m1-3v2m1-3v1m1-2v1m1-2v1m1-2v1m1-2v1m1-2v1m1-3v2m1-3v1m1-2v1m1-2v1m1-2v1m1-2v1m1-2v1m1-3v2m1-3v1m1-2v1m1-2v1m1-2v1m1-2v1m1-3v2m1-3v1m1-2v1m1-2v1m1-2v1m1-2v1m1-2v1m1-3v2m1-3v1m1-2v1m1-2v1m1-2v1m1-2v1m1-2v1m1-3v2m1-3v1m1-2v1m1-2v1m1-2v1m1-2v1m1-2v1m1-3v2m1-3v1m1-2v1m1-2v1m1-2v1m1-2v1m1-2v1m1-3v2m1-3v1m1-2v1m1-2v1"/>
<path transform="translate(.5 0)" stroke="#0000ff" d="M364 512v1m1-2v1m1-2v1m1-3v2m1-3v1m1-2v1m1-2v1m1-2v1m1-2v1m1-2v1m1-3v2m1-3v1m1-2v1m1-2v1m1-2v1m1-2v1m1-2v1m1-3v2m1-3v1m1-2v1m1-2v1m1-2v1m1-2v1m1-2v1m1-3v2m1-3v1m1-2v1m1-2v1m1-2v1m1-2v1m1-2v1m1-3v2m1-3v1m1-2v1m1-2v1m1-2v1m1-2v1m1-3v2m1-3v1m1-2v1m1-2v1m1-2v1m1-2v1m1-2v1m1-3v2m1-3v1m1-2v1m1-2v1m1-2v1m1-2v1m1-2v1m1-3v2m1-3v1m1-2v1m1-2v1m1-2v1m1-2v1m1-2v1m1-3v2m1-3v1m1-2v1m1-2v1m1-2v1m1-2v1m1-3v2m1-3v1m1-2v1m1-2v1m1-2v1m1-2v1m1-2v1m1-3v2m1-3v1m1-2v1m1-2v1m1-2v1m1-2v1m1-2v1m1-3v2m1-3v1m1-2v1m1-2v1m1-2v1m1-2v1m1-2v1m1-3v2m1-3v1m1-2v1m1-2v1m1-2v1m1-2v1m1-2v1m1-3v2m1-3v1m1-2v1m1-2v1"/>
<path transform="translate(.5 0)" stroke="#008080" d="M470 512v1m1-2v1m1-2v1m1-3v2m1-3v1m1-2v1m1-2v1m1-2v1m1-2v1m1-2v1m1-3v2m1-3v1m1-2v1m1-2v1m1-2v1m1-2v1m1-2v1m1-3v2m1-3v1m1-2v1m1-2v1m1-2v1m1-2v1m1-2v1m1-3v2m1-3v1m1-2v1m1-2v1m1-2v1m1-2v1m1-2v1m1-3v2m1-3v1m1-2v1m1-2v1m1-2v1m1-2v1m1-3v2m1-3v1m1-2v1m1-2v1m1-2v1m1-2v1m1-2v1m1-3v2m1-3v1m1-2v1m1-2v1m1-2v1m1-2v1m1-2v1m1-3v2m1-3v1m1-2v1m1-2v1m1-2v1m1-2v1m1-2v1m1-3v2m1-3v1m1-2v1m1-2v1m1-2v1m1-2v1m1-3v2m1-3v1m1-2v1m1-2v1m1-2v1m1-2v1m1-2v1m1-3v2m1-3v1m1-2v1m1-2v1m1-2v1m1-2v1m1-2v1m1-3v2m1-3v1m1-2v1m1-2v1m1-2v1m1-2v1m1-2v1m1-3v2m1-3v1m1-2v1m1-2v1m1-2v1m1-2v1m1-2v1m1-3v2m1-3v1m1-2v1m1-2v1"/>
<path transform="translate(.5 0)" stroke="#ff0000" d="M576 512v1m1-2v1m1-2v1m1-3v2m1-3v1m1-2v1m1-2v1m1-2v1m1-2v1m1-2v1m1-3v2m1-3v1m1-2v1m1-2v1m1-2v1m1-2v1m1-2v1m1-3v2m1-3v1m1-2v1m1-2v1m1-2v1m1-2v1m1-2v1m1-3v2m1-3v1m1-2v1m1-2v1m1-2v1m1-2v1m1-2v1m1-3v2m1-3v1m1-2v1m1-2v1m1-2v1m1-2v1m1-3v2m1-3v1m1-2v1m1-2v1m1-2v1m1-2v1m1-2v1m1-3v2m1-3v1m1-2v1m1-2v1m1-2v1m1-2v1m1-2v1m1-3v2m1-3v1m1-2v1m1-2v1m1-2v1m1-2v1m1-2v1m1-3v2m1-3v1m1-2v1m1-2v1m1-2v1m1-2v1m1-3v2m1-3v1m1-2v1m1-2v1m1-2v1m1-2v1m1-2v1m1-3v2m1-3v1m1-2v1m1-2v1m1-2v1m1-2v1m1-2v1m1-3v2m1-3v1m1-2v1m1-2v1m1-2v1m1-2v1m1-2v1m1-3v2m1-3v1m1-2v1m1-2v1m1-2v1m1-2v1m1-2v1m1-3v2m1-3v1m1-2v1m1-2v1"/>
<path transform="translate(.5 0)" stroke="#008080" d="M682 512v1m1-2v1m1-2v1m1-3v2m1-3v1m1-2v1m1-2v1m1-2v1m1-2v1m1-2v1m1-3v2m1-3v1m1-2v1m1-2v1m1-2v1m1-2v1m1-2v1m1-3v2m1-3v1m1-2v1m1-2v1m1-2v1m1-2v1m1-2v1m1-3v2m1-3v1m1-2v1m1-2v1m1-2v1m1-2v1m1-2v1m1-3v2m1-3v1m1-2v1m1-2v1m1-2v1m1-2v1m1-3v2m1-3v1m1-2v1m1-2v1m1-2v1m1-2v1m1-2v1m1-3v2m1-3v1m1-2v1m1-2v1m1-2v1m1-2v1m1-2v1m1-3v2m1-3v1m1-2v1m1-2v1m1-2v1m1-2v1m1-2v1m1-3v2m1-3v1m1-2v1m1-2v1m1-2v1m1-2v1m1-3v2m1-3v1m1-2v1m1-2v1m1-2v1m1-2v1m1-2v1m1-3v2m1-3v1m1-2v1m1-2v1m1-2v1m1-2v1m1-2v1m1-3v2m1-3v1m1-2v1m1-2v1m1-2v1m1-2v1m1-2v1m1-3v2m1-3v1m1-2v1m1-2v1m1-2v1m1-2v1m1-2v1m1-3v2m1-3v1m1-2v1m1-2v1"/>
<path transform="translate(.5 0)" stroke="#00ff00" d="M788 512v1m1-2v1m1-2v1m1-3v2m1-3v1m1-2v1m1-2v1m1-2v1m1-2v1m1-2v1m1-3v2m1-3v1m1-2v1m1-2v1m1-2v1m1-2v1m1-2v1m1-3v2m1-3v1m1-2v1m1-2v1m1-2v1m1-2v1m1-2v1m1-3v2m1-3v1m1-2v1m1-2v1m1-2v1m1-2v1m1-2v1m1-3v2m1-3v1m1-2v1m1-2v1m1-2v1m1-2v1m1-3v2m1-3v1m1-2v1m1-2v1m1-2v1m1-2v1m1-2v1m1-3v2m1-3v1m1-2v1m1-2v1m1-2v1m1-2v1m1-2v1m1-3v2m1-3v1m1-2v1m1-2v1m1-2v1m1-2v1m1-2v1m1-3v2m1-3v1m1-2v1m1-2v1m1-2v1m1-2v1m1-3v2m1-3v1m1-2v1m1-2v1m1-2v1m1-2v1m1-2v1m1-3v2m1-3v1m1-2v1m1-2v1m1-2v1m1-2v1m1-2v1m1-3v2m1-3v1m1-2v1m1-2v1m1-2v1m1-2v1m1-2v1m1-3v2m1-3v1m1-2v1m1-2v1m1-2v1m1-2v1m1-2v1m1-3v2m1-3v1m1-2v1m1-2v1"/>
<path transform="translate(.5 0)" stroke="#ff0000" d="M894 512v1m1-2v1m1-2v1m1-3v2m1-3v1m1-2v1m1-2v1m1-2v1m1-2v1m1-2v1m1-3v2m1-3v1m1-2v1m1-2v1m1-2v1m1-2v1m1-2v1m1-3v2m1-3v1m1-2v1m1-2v1m1-2v1m1-2v1m1-2v1m1-3v2m1-3v1m1-2v1m1-2v1m1-2v1m1-2v1m1-2v1m1-3v2m1-3v1m1-2v1m1-2v1m1-2v1m1-2v1m1-3v2m1-3v1m1-2v1m1-2v1m1-2v1m1-2v1m1-2v1m1-3v2m1-3v1m1-2v1m1-2v1m1-2v1m1-2v1m1-2v1m1-3v2m1-3v1m1-2v1m1-2v1m1-2v1m1-2v1m1-2v1m1-3v2m1-3v1m1-2v1m1-2v1m1-2v1m1-2v1m1-3v2m1-3v1m1-2v1m1-2v1m1-2v1m1-2v1m1-2v1m1-3v2m1-3v1m1-2v1m1-2v1m1-2v1m1-2v1m1-2v1m1-3v2m1-3v1m1-2v1m1-2v1m1-2v1m1-2v1m1-2v1m1-3v2m1-3v1m1-2v1m1-2v1m1-2v1m1-2v1m1-2v1m1-3v2m1-3v1m1-2v1m1-2v1"/>
<path transform="translate(.5 0)" stroke="#0000ff" d="M1000 512v1m1-2v1m1-2v1"/>
<path transform="translate(.5 0)" stroke="#0000ff" d="M205 504v1m1-2v1m1-2v1m1-2v1m1-2v1m1-2v1m1-2v1m1-2v1m1-3v2m1-3v1m1-2v1m1-2v1m1-2v1m1-2v1m1-2v1m1-2v1m1-2v1m1-2v1m1-3v2m1-3v1m1-2v1m1-2v1m1-2v1m1-2v1m1-2v1m1-2v1m1-2v1m1-2v1m1-3v2m1-3v1m1-2v1m1-2v1m1-2v1m1-2v1m1-2v1m1-2v1m1-2v1m1-2v1m1-3v2m1-3v1m1-2v1m1-2v1m1-2v1m1-2v1m1-2v1m1-2v1m1-2v1m1-3v2m1-3v1m1-2v1m1-2v1m1-2v1m1-2v1m1-2v1m1-2v1m1-2v1m1-2v1m1-3v2m1-3v1m1-2v1m1-2v1m1-2v1m1-2v1m1-2v1m1-2v1m1-2v1m1-2v1m1-3v2m1-3v1m1-2v1m1-2v1m1-2v1m1-2v1m1-2v1m1-2v1m1-2v1m1-2v1m1-3v2m1-3v1m1-2v1m1-2v1m1-2v1m1-2v1m1-2v1m1-2v1m1-2v1m1-2v1m1-3v2m1-3v1m1-2v1m1-2v1m1-2v1m1-2v1"/>
<path transform="translate(.5 0)" stroke="#808000" d="M304 512v1m1-2v1m1-2v1m1-2v1m1-2v1m1-3v2m1-3v1m1-2v1m1-2v1m1-2v1m1-2v1m1-2v1m1-2v1m1-2v1m1-2v1m1-3v2m1-3v1m1-2v1m1-2v1m1-2v1m1-2v1m1-2v1m1-2v1m1-2v1m1-2v1m1-3v2m1-3v1m1-2v1m1-2v1m1-2v1m1-2v1m1-2v1m1-2v1m1-2v1m1-2v1m1-3v2m1-3v1m1-2v1m1-2v1m1-2v1m1-2v1m1-2v1m1-2v1m1-2v1m1-2v1m1-3v2m1-3v1m1-2v1m1-2v1m1-2v1m1-2v1m1-2v1m1-2v1m1-2v1m1-3v2m1-3v1m1-2v1m1-2v1m1-2v1m1-2v1m1-2v1m1-2v1m1-2v1m1-2v1m1-3v2m1-3v1m1-2v1m1-2v1m1-2v1m1-2v1m1-2v1m1-2v1m1-2v1m1-2v1m1-3v2m1-3v1m1-2v1m1-2v1m1-2v1m1-2v1m1-2v1m1-2v1m1-2v1m1-2v1m1-3v2m1-3v1m1-2v1m1-2v1m1-2v1m1-2v1m1-2v1m1-2v1m1-2v1m1-2v1m1-3v2m1-3v1m1-2v1m1-2v1m1-2v1m1-2v1"/>
<path transform="translate(.5 0)" stroke="#800080" d="M410 512v1m1-2v1m1-2v1m1-2v1m1-2v1m1-3v2m1-3v1m1-2v1m1-2v1m1-2v1m1-2v1m1-2v1m1-2v1m1-2v1m1-2v1m1-3v2m1-3v1m1-2v1m1-2v1m1-2v1m1-2v1m1-2v1m1-2v1m1-2v1m1-2v1m1-3v2m1-3v1m1-2v1m1-2v1m1-2v1m1-2v1m1-2v1m1-2v1m1-2v1m1-2v1m1-3v2m1-3v1m1-2v1m1-2v1m1-2v1m1-2v1m1-2v1m1-2v1m1-2v1m1-2v1m1-3v2m1-3v1m1-2v1m1-2v1m1-2v1m1-2v1m1-2v1m1-2v1m1-2v1m1-3v2m1-3v1m1-2v1m1-2v1m1-2v1m1-2v1m1-2v1m1-2v1m1-2v1m1-2v1m1-3v2m1-3v1m1-2v1m1-2v1m1-2v1m1-2v1m1-2v1m1-2v1m1-2v1m1-2v1m1-3v2m1-3v1m1-2v1m1-2v1m1-2v1m1-2v1m1-2v1m1-2v1m1-2v1m1-2v1m1-3v2m1-3v1m1-2v1m1-2v1m1-2v1m1-2v1m1-2v1m1-2v1m1-2v1m1-2v1m1-3v2m1-3v1m1-2v1m1-2v1m1-2v1m1-2v1"/>
<path transform="translate(.5 0)" stroke="#0000ff" d="M516 512v1m1-2v1m1-2v1m1-2v1m1-2v1m1-3v2m1-3v1m1-2v1m1-2v1m1-2v1m1-2v1m1-2v1m1-2v1m1-2v1m1-2v1m1-3v2m1-3v1m1-2v1m1-2v1m1-2v1m1-2v1m1-2v1m1-2v1m1-2v1m1-2v1m1-3v2m1-3v1m1-2v1m1-2v1m1-2v1m1-2v1m1-2v1m1-2v1m1-2v1m1-2v1m1-3v2m1-3v1m1-2v1m1-2v1m1-2v1m1-2v1m1-2v1m1-2v1m1-2v1m1-2v1m1-3v2m1-3v1m1-2v1m1-2v1m1-2v1m1-2v1m1-2v1m1-2v1m1-2v1m1-3v2m1-3v1m1-2v1m1-2v1m1-2v1m1-2v1m1-2v1m1-2v1m1-2v1m1-2v1m1-3v2m1-3v1m1-2v1m1-2v1m1-2v1m1-2v1m1-2v1m1-2v1m1-2v1m1-2v1m1-3v2m1-3v1m1-2v1m1-2v1m1-2v1m1-2v1m1-2v1m1-2v1m1-2v1m1-2v1m1-3v2m1-3v1m1-2v1m1-2v1m1-2v1m1-2v1m1-2v1m1-2v1m1-2v1m1-2v1m1-3v2m1-3v1m1-2v1m1-2v1m1-2v1m1-2v1"/>
<path transform="translate(.5 0)" stroke="#ff0000" d="M622 512v1m1-2v1m1-2v1m1-2v1m1-2v1m1-3v2m1-3v1m1-2v1m1-2v1m1-2v1m1-2v1m1-2v1m1-2v1m1-2v1m1-2v1m1-3v2m1-3v1m1-2v1m1-2v1m1-2v1m1-2v1m1-2v1m1-2v1m1-2v1m1-2v1m1-3v2m1-3v1m1-2v1m1-2v1m1-2v1m1-2v1m1-2v1m1-2v1m1-2v1m1-2v1m1-3v2m1-3v1m1-2v1m1-2v1m1-2v1m1-2v1m1-2v1m1-2v1m1-2v1m1-2v1m1-3v2m1-3v1m1-2v1m1-2v1m1-2v1m1-2v1m1-2v1m1-2v1m1-2v1m1-3v2m1-3v1m1-2v1m1-2v1m1-2v1m1-2v1m1-2v1m1-2v1m1-2v1m1-2v1m1-3v2m1-3v1m1-2v1m1-2v1m1-2v1m1-2v1m1-2v1m1-2v1m1-2v1m1-2v1m1-3v2m1-3v1m1-2v1m1-2v1m1-2v1m1-2v1m1-2v1m1-2v1m1-2v1m1-2v1m1-3v2m1-3v1m1-2v1m1-2v1m1-2v1m1-2v1m1-2v1m1-2v1m1-2v1m1-2v1m1-3v2m1-3v1m1-2v1m1-2v1m1-2v1m1-2v1"/>
<path transform="translate(.5 0)" stroke="#ff0000" d="M728 512v1m1-2v1m1-2v1m1-2v1m1-2v1m1-3v2m1-3v1m1-2v1m1-2v1m1-2v1m1-2v1m1-2v1m1-2v1m1-2v1m1-2v1m1-3v2m1-3v1m1-2v1m1-2v1m1-2v1m1-2v1m1-2v1m1-2v1m1-2v1m1-2v1m1-3v2m1-3v1m1-2v1m1-2v1m1-2v1m1-2v1m1-2v1m1-2v1m1-2v1m1-2v1m1-3v2m1-3v1m1-2v1m1-2v1m1-2v1m1-2v1m1-2v1m1-2v1m1-2v1m1-2v1m1-3v2m1-3v1m1-2v1m1-2v1m1-2v1m1-2v1m1-2v1m1-2v1m1-2v1m1-3v2m1-3v1m1-2v1m1-2v1m1-2v1m1-2v1m1-2v1m1-2v1m1-2v1m1-2v1m1-3v2m1-3v1m1-2v1m1-2v1m1-2v1m1-2v1m1-2v1m1-2v1m1-2v1m1-2v1m1-3v2m1-3v1m1-2v1m1-2v1m1-2v1m1-2v1m1-2v1m1-2v1m1-2v1m1-2v1m1-3v2m1-3v1m1-2v1m1-2v1m1-2v1m1-2v1m1-2v1m1-2v1m1-2v1m1-2v1m1-3v2m1-3v1m1-2v1m1-2v1m1-2v1m1-2v1"/>
<path transform="translate(.5 0)" stroke="#0000ff" d="M834 512v1m1-2v1m1-2v1m1-2v1m1-2v1m1-3v2m1-3v1m1-2v1m1-2v1m1-2v1m1-2v1m1-2v1m1-2v1m1-2v1m1-2v1m1-3v2m1-3v1m1-2v1m1-2v1m1-2v1m1-2v1m1-2v1m1-2v1m1-2v1m1-2v1m1-3v2m1-3v1m1-2v1m1-2v1m1-2v1m1-2v1m1-2v1m1-2v1m1-2v1m1-2v1m1-3v2m1-3v1m1-2v1m1-2v1m1-2v1m1-2v1m1-2v1m1-2v1m1-2v1m1-2v1m1-3v2m1-3v1m1-2v1m1-2v1m1-2v1m1-2v1m1-2v1m1-2v1m1-2v1m1-3v2m1-3v1m1-2v1m1-2v1m1-2v1m1-2v1m1-2v1m1-2v1m1-2v1m1-2v1m1-3v2m1-3v1m1-2v1m1-2v1m1-2v1m1-2v1m1-2v1m1-2v1m1-2v1m1-2v1m1-3v2m1-3v1m1-2v1m1-2v1m1-2v1m1-2v1m1-2v1m1-2v1m1-2v1m1-2v1m1-3v2m1-3v1m1-2v1m1-2v1m1-2v1m1-2v1m1-2v1m1-2v1m1-2v1m1-2v1m1-3v2m1-3v1m1-2v1m1-2v1m1-2v1m1-2v1"/>
<path transform="translate(.5 0)" stroke="#0000ff" d="M940 512v1m1-2v1m1-2v1m1-2v1m1-2v1m1-3v2m1-3v1m1-2v1m1-2v1m1-2v1m1-2v1m1-2v1m1-2v1m1-2v1m1-2v1m1-3v2m1-3v1m1-2v1m1-2v1m1-2v1m1-2v1m1-2v1m1-2v1m1-2v1m1-2v1m1-3v2m1-3v1m1-2v1m1-2v1m1-2v1m1-2v1m1-2v1m1-2v1m1-2v1m1-2v1m1-3v2m1-3v1m1-2v1m1-2v1m1-2v1m1-2v1m1-2v1m1-2v1m1-2v1m1-2v1m1-3v2m1-3v1m1-2v1m1-2v1m1-2v1m1-2v1m1-2v1m1-2v1m1-2v1m1-3v2m1-3v1m1-2v1m1-2v1m1-2v1m1-2v1m1-2v1m1-2v1m1-2v1"/>
<path transform="translate(.5 0)" stroke="#0000ff" d="M205 477v1m1 0v1m1 0v1m1 0v1m1 0v1m1 0v1m1 0v1m1 0v1m1 0v1m1 0v1m1 0v2m1 0v1m1 0v1m1 0v1m1 0v1m1 0v1m1 0v1m1 0v1m1 0v1m1 0v1m1 0v1m1 0v1m1 0v1m1 0v1m1 0v2m1 0v1m1 0v1m1 0v1m1 0v1m1 0v1m1 0v1m1 0v1"/>
<path transform="translate(.5 0)" stroke="#800080" d="M244 405v1m1 0v1m1 0v1m1 0v1m1 0v1m1 0v1m1 0v1m1 0v2m1 0v1m1 0v1m1 0v1m1 0v1m1 0v1m1 0v1m1 0v1m1 0v1m1 0v1m1 0v1m1 0v1m1 0v1m1 0v1m1 0v2m1 0v1m1 0v1m1 0v1m1 0v1m1 0v1m1 0v1m1 0v1m1 0v1m1 0v1m1 0v1m1 0v1m1 0v1m1 0v1m1 0v2m1 0v1m1 0v1m1 0v1m1 0v1m1 0v1m1 0v1m1 0v1m1 0v1m1 0v1m1 0v1m1 0v1m1 0v1m1 0v1m1 0v2m1 0v1m1 0v1m1 0v1m1 0v1m1 0v1m1 0v1m1 0v1m1 0v1m1 0v1m1 0v1m1 0v1m1 0v1m1 0v1m1 0v2m1 0v1m1 0v1m1 0v1m1 0v1m1 0v1m1 0v1m1 0v1m1 0v1m1 0v1m1 0v1m1 0v1m1 0v1m1 0v1m1 0v2m1 0v1m1 0v1m1 0v1m1 0v1m1 0v1m1 0v1m1 0v1m1 0v1m1 0v1m1 0v1m1 0v1m1 0v1m1 0v1m1 0v2m1 0v1m1 0v1m1 0v1m1 0v1m1 0v1m1 0v1m1 0v1"/>
<path transform="translate(.5 0)" stroke="#ff0000" d="M350 405v1m1 0v1m1 0v1m1 0v1m1 0v1m1 0v1m1 0v1m1 0v2m1 0v1m1 0v1m1 0v1m1 0v1m1 0v1m1 0v1m1 0v1m1 0v1m1 0v1m1 0v1m1 0v1m1 0v1m1 0v1m1 0v2m1 0v1m1 0v1m1 0v1m1 0v1m1 0v1m1 0v1m1 0v1m1 0v1m1 0v1m1 0v1m1 0v1m1 0v1m1 0v1m1 0v2m1 0v1m1 0v1m1 0v1m1 0v1m1 0v1m1 0v1m1 0v1m1 0v1m1 0v1m1 0v1m1 0v1m1 0v1m1 0v1m1 0v2m1 0v1m1 0v1m1 0v1m1 0v1m1 0v1m1 0v1m1 0v1m1 0v1m1 0v1m1 0v1m1 0v1m1 0v1m1 0v1m1 0v2m1 0v1m1 0v1m1 0v1m1 0v1m1 0v1m1 0v1m1 0v1m1 0v1m1 0v1m1 0v1m1 0v1m1 0v1m1 0v1m1 0v2m1 0v1m1 0v1m1 0v1m1 0v1m1 0v1m1 0v1m1 0v1m1 0v1m1 0v1m1 0v1m1 0v1m1 0v1m1 0v1m1 0v2m1 0v1m1 0v1m1 0v1m1 0v1m1 0v1m1 0v1m1 0v1"/>
<path transform="translate(.5 0)" stroke="#800080" d="M456 405v1m1 0v1m1 0v1m1 0v1m1 0v1m1 0v1m1 0v1m1 0v2m1 0v1m1 0v1m1 0v1m1 0v1m1 0v1m1 0v1m1 0v1m1 0v1m1 0v1m1 0v1m1 0v1m1 0v1m1 0v1m1 0v2m1 0v1m1 0v1m1 0v1m1 0v1m1 0v1m1 0v1m1 0v1m1 0v1m1 0v1m1 0v1m1 0v1m1 0v1m1 0v1m1 0v2m1 0v1m1 0v1m1 0v1m1 0v1m1 0v1m1 0v1m1 0v1m1 0v1m1 0v1m1 0v1m1 0v1m1 0v1m1 0v1m1 0v2m1 0v1m1 0v1m1 0v1m1 0v1m1 0v1m1 0v1m1 0v1m1 0v1m1 0v1m1 0v1m1 0v1m1 0v1m1 0v1m1 0v2m1 0v1m1 0v1m1 0v1m1 0v1m1 0v1m1 0v1m1 0v1m1 0v1m1 0v1m1 0v1m1 0v1m1 0v1m1 0v1m1 0v2m1 0v1m1 0v1m1 0v1m1 0v1m1 0v1m1 0v1m1 0v1m1 0v1m1 0v1m1 0v1m1 0v1m1 0v1m1 0v1m1 0v2m1 0v1m1 0v1m1 0v1m1 0v1m1 0v1m1 0v1m1 0v1"/>
<path transform="translate(.5 0)" stroke="#00ff00" d="M562 405v1m1 0v1m1 0v1m1 0v1m1 0v1m1 0v1m1 0v1m1 0v2m1 0v1m1 0v1m1 0v1m1 0v1m1 0v1m1 0v1m1 0v1m1 0v1m1 0v1m1 0v1m1 0v1m1 0v1m1 0v1m1 0v2m1 0v1m1 0v1m1 0v1m1 0v1m1 0v1m1 0v1m1 0v1m1 0v1m1 0v1m1 0v1m1 0v1m1 0v1m1 0v1m1 0v2m1 0v1m1 0v1m1 0v1m1 0v1m1 0v1m1 0v1m1 0v1m1 0v1m1 0v1m1 0v1m1 0v1m1 0v1m1 0v1m1 0v2m1 0v1m1 0v1m1 0v1m1 0v1m1 0v1m1 0v1m1 0v1m1 0v1m1 0v1m1 0v1m1 0v1m1 0v1m1 0v1m1 0v2m1 0v1m1 0v1m1 0v1m1 0v1m1 0v1m1 0v1m1 0v1m1 0v1m1 0v1m1 0v1m1 0v1m1 0v1m1 0v1m1 0v2m1 0v1m1 0v1m1 0v1m1 0v1m1 0v1m1 0v1m1 0v1m1 0v1m1 0v1m1 0v1m1 0v1m1 0v1m1 0v1m1 0v2m1 0v1m1 0v1m1 0v1m1 0v1m1 0v1m1 0v1m1 0v1"/>
<path transform="translate(.5 0)" stroke="#ff0000" d="M668 405v1m1 0v1m1 0v1m1 0v1m1 0v1m1 0v1m1 0v1m1 0v2m1 0v1m1 0v1m1 0v1m1 0v1m1 0v1m1 0v1m1 0v1m1 0v1m1 0v1m1 0v1m1 0v1m1 0v1m1 0v1m1 0v2m1 0v1m1 0v1m1 0v1m1 0v1m1 0v1m1 0v1m1 0v1m1 0v1m1 0v1m1 0v1m1 0v1m1 0v1m1 0v1m1 0v2m1 0v1m1 0v1m1 0v1m1 0v1m1 0v1m1 0v1m1 0v1m1 0v1m1 0v1m1 0v1m1 0v1m1 0v1m1 0v1m1 0v2m1 0v1m1 0v1m1 0v1m1 0v1m1 0v1m1 0v1m1 0v1m1 0v1m1 0v1m1 0v1m1 0v1m1 0v1m1 0v1m1 0v2m1 0v1m1 0v1m1 0v1m1 0v1m1 0v1m1 0v1m1 0v1m1 0v1m1 0v1m1 0v1m1 0v1m1 0v1m1 0v1m1 0v2m1 0v1m1 0v1m1 0v1m1 0v1m1 0v1m1 0v1m1 0v1m1 0v1m1 0v1m1 0v1m1 0v1m1 0v1m1 0v1m1 0v2m1 0v1m1 0v1m1 0v1m1 0v1m1 0v1m1 0v1m1 0v1"/>
<path transform="translate(.5 0)" stroke="#0000ff" d="M774 405v1m1 0v1m1 0v1m1 0v1m1 0v1m1 0v1m1 0v1m1 0v2m1 0v1m1 0v1m1 0v1m1 0v1m1 0v1m1 0v1m1 0v1m1 0v1m1 0v1m1 0v1m1 0v1m1 0v1m1 0v1m1 0v2m1 0v1m1 0v1m1 0v1m1 0v1m1 0v1m1 0v1m1 0v1m1 0v1m1 0v1m1 0v1m1 0v1m1 0v1m1 0v1m1 0v2m1 0v1m1 0v1m1 0v1m1 0v1m1 0v1m1 0v1m1 0v1m1 0v1m1 0v1m1 0v1m1 0v1m1 0v1m1 0v1m1 0v2m1 0v1m1 0v1m1 0v1m1 0v1m1 0v1m1 0v1m1 0v1m1 0v1m1 0v1m1 0v1m1 0v1m1 0v1m1 0v1m1 0v2m1 0v1m1 0v1m1 0v1m1 0v1m1 0v1m1 0v1m1 0v1m1 0v1m1 0v1m1 0v1m1 0v1m1 0v1m1 0v1m1 0v2m1 0v1m1 0v1m1 0v1m1 0v1m1 0v1m1 0v1m1 0v1m1 0v1m1 0v1m1 0v1m1 0v1m1 0v1m1 0v1m1 0v2m1 0v1m1 0v1m1 0v1m1 0v1m1 0v1m1 0v1m1 0v1"/>
<path transform="translate(.5 0)" stroke="#800080" d="M880 405v1m1 0v1m1 0v1m1 0v1m1 0v1m1 0v1m1 0v1m1 0v2m1 0v1m1 0v1m1 0v1m1 0v1m1 0v1m1 0v1m1 0v1m1 0v1m1 0v1m1 0v1m1 0v1m1 0v1m1 0v1m1 0v2m1 0v1m1 0v1m1 0v1m1 0v1m1 0v1m1 0v1m1 0v1m1 0v1m1 0v1m1 0v1m1 0v1m1 0v1m1 0v1m1 0v2m1 0v1m1 0v1m1 0v1m1 0v1m1 0v1m1 0v1m1 0v1m1 0v1m1 0v1m1 0v1m1 0v1m1 0v1m1 0v1m1 0v2m1 0v1m1 0v1m1 0v1m1 0v1m1 0v1m1 0v1m1 0v1m1 0v1m1 0v1m1 0v1m1 0v1m1 0v1m1 0v1m1 0v2m1 0v1m1 0v1m1 0v1m1 0v1m1 0v1m1 0v1m1 0v1m1 0v1m1 0v1m1 0v1m1 0v1m1 0v1m1 0v1m1 0v2m1 0v1m1 0v1m1 0v1m1 0v1m1 0v1m1 0v1m1 0v1m1 0v1m1 0v1m1 0v1m1 0v1m1 0v1m1 0v1m1 0v2m1 0v1m1 0v1m1 0v1m1 0v1m1 0v1m1 0v1m1 0v1"/>
<path transform="translate(.5 0)" stroke="#0000ff" d="M986 405v1m1 0v1m1 0v1m1 0v1m1 0v1m1 0v1m1 0v1m1 0v2m1 0v1m1 0v1m1 0v1m1 0v1m1 0v1m1 0v1m1 0v1m1 0v1m1 0v1"/>
<path transform="translate(.5 0)" stroke="#800080" d="M205 408v1m1 0v1m1 0v1m1 0v1m1 0v2m1 0v1m1 0v1m1 0v1m1 0v1m1 0v1m1 0v1m1 0v1m1 0v1m1 0v1m1 0v1m1 0v1m1 0v1m1 0v1m1 0v2m1 0v1m1 0v1m1 0v1m1 0v1m1 0v1m1 0v1m1 0v1m1 0v1m1 0v1m1 0v1m1 0v1m1 0v1m1 0v1m1 0v2m1 0v1m1 0v1m1 0v1m1 0v1m1 0v1m1 0v1m1 0v1m1 0v1m1 0v1m1 0v1m1 0v1m1 0v1m1 0v1m1 0v2m1 0v1m1 0v1m1 0v1m1 0v1m1 0v1m1 0v1m1 0v1m1 0v1m1 0v1m1 0v1m1 0v1m1 0v1m1 0v1m1 0v2m1 0v1m1 0v1m1 0v1m1 0v1m1 0v1m1 0v1m1 0v1m1 0v1m1 0v1m1 0v1m1 0v1m1 0v1m1 0v1m1 0v2m1 0v1m1 0v1m1 0v1m1 0v1m1 0v1m1 0v1m1 0v1m1 0v1m1 0v1m1 0v1m1 0v1m1 0v1m1 0v1m1 0v2m1 0v1m1 0v1m1 0v1m1 0v1m1 0v1m1 0v1m1 0v1"/>
<path transform="translate(.5 0)" stroke="#808000" d="M308 405v1m1 0v1m1 0v1m1 0v1m1 0v1m1 0v1m1 0v1m1 0v2m1 0v1m1 0v1m1 0v1m1 0v1m1 0v1m1 0v1m1 0v1m1 0v1m1 0v1m1 0v1m1 0v1m1 0v1m1 0v1m1 0v2m1 0v1m1 0v1m1 0v1m1 0v1m1 0v1m1 0v1m1 0v1m1 0v1m1 0v1m1 0v1m1 0v1m1 0v1m1 0v1m1 0v2m1 0v1m1 0v1m1 0v1m1 0v1m1 0v1m1 0v1m1 0v1m1 0v1m1 0v1m1 0v1m1 0v1m1 0v1m1 0v1m1 0v2m1 0v1m1 0v1m1 0v1m1 0v1m1 0v1m1 0v1m1 0v1m1 0v1m1 0v1m1 0v1m1 0v1m1 0v1m1 0v1m1 0v2m1 0v1m1 0v1m1 0v1m1 0v1m1 0v1m1 0v1m1 0v1m1 0v1m1 0v1m1 0v1m1 0v1m1 0v1m1 0v1m1 0v2m1 0v1m1 0v1m1 0v1m1 0v1m1 0v1m1 0v1m1 0v1m1 0v1m1 0v1m1 0v1m1 0v1m1 0v1m1 0v1m1 0v2m1 0v1m1 0v1m1 0v1m1 0v1m1 0v1m1 0v1m1 0v1"/>
<path transform="translate(.5 0)" stroke="#ff0000" d="M414 405v1m1 0v1m1 0v1m1 0v1m1 0v1m1 0v1m1 0v1m1 0v2m1 0v1m1 0v1m1 0v1m1 0v1m1 0v1m1 0v1m1 0v1m1 0v1m1 0v1m1 0v1m1 0v1m1 0v1m1 0v1m1 0v2m1 0v1m1 0v1m1 0v1m1 0v1m1 0v1m1 0v1m1 0v1m1 0v1m1 0v1m1 0v1m1 0v1m1 0v1m1 0v1m1 0v2m1 0v1m1 0v1m1 0v1m1 0v1m1 0v1m1 0v1m1 0v1m1 0v1m1 0v1m1 0v1m1 0v1m1 0v1m1 0v1m1 0v2m1 0v1m1 0v1m1 0v1m1 0v1m1 0v1m1 0v1m1 0v1m1 0v1m1 0v1m1 0v1m1 0v1m1 0v1m1 0v1m1 0v2m1 0v1m1 0v1m1 0v1m1 0v1m1 0v1m1 0v1m1 0v1m1 0v1m1 0v1m1 0v1m1 0v1m1 0v1m1 0v1m1 0v2m1 0v1m1 0v1m1 0v1m1 0v1m1 0v1m1 0v1m1 0v1m1 0v1m1 0v1m1 0v1m1 0v1m1 0v1m1 0v1m1 0v2m1 0v1m1 0v1m1 0v1m1 0v1m1 0v1m1 0v1m1 0v1"/>
<path transform="translate(.5 0)" stroke="#ff0000" d="M520 405v1m1 0v1m1 0v1m1 0v1m1 0v1m1 0v1m1 0v1m1 0v2m1 0v1m1 0v1m1 0v1m1 0v1m1 0v1m1 0v1m1 0v1m1 0v1m1 0v1m1 0v1m1 0v1m1 0v1m1 0v1m1 0v2m1 0v1m1 0v1m1 0v1m1 0v1m1 0v1m1 0v1m1 0v1m1 0v1m1 0v1m1 0v1m1 0v1m1 0v1m1 0v1m1 0v2m1 0v1m1 0v1m1 0v1m1 0v1m1 0v1m1 0v1m1 0v1m1 0v1m1 0v1m1 0v1m1 0v1m1 0v1m1 0v1m1 0v2m1 0v1m1 0v1m1 0v1m1 0v1m1 0v1m1 0v1m1 0v1m1 0v1m1 0v1m1 0v1m1 0v1m1 0v1m1 0v1m1 0v2m1 0v1m1 0v1m1 0v1m1 0v1m1 0v1m1 0v1m1 0v1m1 0v1m1 0v1m1 0v1m1 0v1m1 0v1m1 0v1m1 0v2m1 0v1m1 0v1m1 0v1m1 0v1m1 0v1m1 0v1m1 0v1m1 0v1m1 0v1m1 0v1m1 0v1m1 0v1m1 0v1m1 0v2m1 0v1m1 0v1m1 0v1m1 0v1m1 0v1m1 0v1m1 0v1"/>
<path transform="translate(.5 0)" stroke="#0000ff" d="M626 405v1m1 0v1m1 0v1m1 0v1m1 0v1m1 0v1m1 0v1m1 0v2m1 0v1m1 0v1m1 0v1m1 0v1m1 0v1m1 0v1m1 0v1m1 0v1m1 0v1m1 0v1m1 0v1m1 0v1m1 0v1m1 0v2m1 0v1m1 0v1m1 0v1m1 0v1m1 0v1m1 0v1m1 0v1m1 0v1m1 0v1m1 0v1m1 0v1m1 0v1m1 0v1m1 0v2m1 0v1m1 0v1m1 0v1m1 0v1m1 0v1m1 0v1m1 0v1m1 0v1m1 0v1m1 0v1m1 0v1m1 0v1m1 0v1m1 0v2m1 0v1m1 0v1m1 0v1m1 0v1m1 0v1m1 0v1m1 0v1m1 0v1m1 0v1m1 0v1m1 0v1m1 0v1m1 0v1m1 0v2m1 0v1m1 0v1m1 0v1m1 0v1m1 0v1m1 0v1m1 0v1m1 0v1m1 0v1m1 0v1m1 0v1m1 0v1m1 0v1m1 0v2m1 0v1m1 0v1m1 0v1m1 0v1m1 0v1m1 0v1m1 0v1m1 0v1m1 0v1m1 0v1m1 0v1m1 0v1m1 0v1m1 0v2m1 0v1m1 0v1m1 0v1m1 0v1m1 0v1m1 0v1m1 0v1"/>
<path transform="translate(.5 0)" stroke="#0000ff" d="M732 405v1m1 0v1m1 0v1m1 0v1m1 0v1m1 0v1m1 0v1m1 0v2m1 0v1m1 0v1m1 0v1m1 0v1m1 0v1m1 0v1m1 0v1m1 0v1m1 0v1m1 0v1m1 0v1m1 0v1m1 0v1m1 0v2m1 0v1m1 0v1m1 0v1m1 0v1m1 0v1m1 0v1m1 0v1m1 0v1m1 0v1m1 0v1m1 0v1m1 0v1m1 0v1m1 0v2m1 0v1m1 0v1m1 0v1m1 0v1m1 0v1m1 0v1m1 0v1m1 0v1m1 0v1m1 0v1m1 0v1m1 0v1m1 0v1m1 0v2m1 0v1m1 0v1m1 0v1m1 0v1m1 0v1m1 0v1m1 0v1m1 0v1m1 0v1m1 0v1m1 0v1m1 0v1m1 0v1m1 0v2m1 0v1m1 0v1m1 0v1m1 0v1m1 0v1m1 0v1m1 0v1m1 0v1m1 0v1m1 0v1m1 0v1m1 0v1m1 0v1m1 0v2m1 0v1m1 0v1m1 0v1m1 0v1m1 0v1m1 0v1m1 0v1m1 0v1m1 0v1m1 0v1m1 0v1m1 0v1m1 0v1m1 0v2m1 0v1m1 0v1m1 0v1m1 0v1m1 0v1m1 0v1m1 0v1"/>
<path transform="translate(.5 0)" stroke="#800080" d="M838 405v1m1 0v1m1 0v1m1 0v1m1 0v1m1 0v1m1 0v1m1 0v2m1 0v1m1 0v1m1 0v1m1 0v1m1 0v1m1 0v1m1 0v1m1 0v1m1 0v1m1 0v1m1 0v1m1 0v1m1 0v1m1 0v2m1 0v1m1 0v1m1 0v1m1 0v1m1 0v1m1 0v1m1 0v1m1 0v1m1 0v1m1 0v1m1 0v1m1 0v1m1 0v1m1 0v2m1 0v1m1 0v1m1 0v1m1 0v1m1 0v1m1 0v1m1 0v1m1 0v1m1 0v1m1 0v1m1 0v1m1 0v1m1 0v1m1 0v2m1 0v1m1 0v1m1 0v1m1 0v1m1 0v1m1 0v1m1 0v1m1 0v1m1 0v1m1 0v1m1 0v1m1 0v1m1 0v1m1 0v2m1 0v1m1 0v1m1 0v1m1 0v1m1 0v1m1 0v1m1 0v1m1 0v1m1 0v1m1 0v1m1 0v1m1 0v1m1 0v1m1 0v2m1 0v1m1 0v1m1 0v1m1 0v1m1 0v1m1 0v1m1 0v1m1 0v1m1 0v1m1 0v1m1 0v1m1 0v1m1 0v1m1 0v2m1 0v1m1 0v1m1 0v1m1 0v1m1 0v1m1 0v1m1 0v1"/>
<path transform="translate(.5 0)" stroke="#0000ff" d="M944 405v1m1 0v1m1 0v1m1 0v1m1 0v1m1 0v1m1 0v1m1 0v2m1 0v1m1 0v1m1 0v1m1 0v1m1 0v1m1 0v1m1 0v1m1 0v1m1 0v1m1 0v1m1 0v1m1 0v1m1 0v1m1 0v2m1 0v1m1 0v1m1 0v1m1 0v1m1 0v1m1 0v1m1 0v1m1 0v1m1 0v1m1 0v1m1 0v1m1 0v1m1 0v1m1 0v2m1 0v1m1 0v1m1 0v1m1 0v1m1 0v1m1 0v1m1 0v1m1 0v1m1 0v1m1 0v1m1 0v1m1 0v1m1 0v1m1 0v2m1 0v1m1 0v1m1 0v1m1 0v1m1 0v1m1 0v1m1 0v1m1 0v1m1 0v1"/>
</g>
<rect x="222" y="296" width="3" height="3" fill="#0000ff"/>
<rect x="277" y="619" width="3" height="3" fill="#008080"/>
<rect x="328" y="296" width="3" height="3" fill="#008080"/>
<rect x="383" y="619" width="3" height="3" fill="#ff0000"/>
<rect x="434" y="296" width="3" height="3" fill="#ff0000"/>
<rect x="489" y="619" width="3" height="3" fill="#008080"/>
<rect x="540" y="296" width="3" height="3" fill="#008080"/>
<rect x="595" y="619" width="3" height="3" fill="#00ff00"/>
<rect x="646" y="296" width="3" height="3" fill="#00ff00"/>
<rect x="701" y="619" width="3" height="3" fill="#800080"/>
<rect x="752" y="296" width="3" height="3" fill="#800080"/>
<rect x="807" y="619" width="3" height="3" fill="#0000ff"/>
<rect x="858" y="296" width="3" height="3" fill="#0000ff"/>
<rect x="913" y="619" width="3" height="3" fill="#808000"/>
<rect x="964" y="296" width="3" height="3" fill="#808000"/>
<rect x="212" y="617" width="3" height="3" fill="#008080"/>
<rect x="267" y="298" width="3" height="3" fill="#00ff00"/>
<rect x="318" y="617" width="3" height="3" fill="#00ff00"/>
<rect x="373" y="298" width="3" height="3" fill="#0000ff"/>
<rect x="424" y="617" width="3" height="3" fill="#0000ff"/>
<rect x="479" y="298" width="3" height="3" fill="#800080"/>
<rect x="530" y="617" width="3" height="3" fill="#800080"/>
<rect x="585" y="298" width="3" height="3" fill="#ff0000"/>
<rect x="636" y="617" width="3" height="3" fill="#ff0000"/>
<rect x="691" y="298" width="3" height="3" fill="#800080"/>
<rect x="742" y="617" width="3" height="3" fill="#800080"/>
<rect x="797" y="298" width="3" height="3" fill="#800080"/>
<rect x="848" y="617" width="3" height="3" fill="#800080"/>
<rect x="903" y="298" width="3" height="3" fill="#0000ff"/>
<rect x="954" y="617" width="3" height="3" fill="#0000ff"/>
<rect x="244" y="510" width="3" height="3" fill="#ff0000"/>
<rect x="235" y="298" width="3" height="3" fill="#0000ff"/>
<rect x="350" y="510" width="3" height="3" fill="#0000ff"/>
<rect x="337" y="298" width="3" height="3" fill="#008080"/>
<rect x="452" y="510" width="3" height="3" fill="#008080"/>
<rect x="447" y="298" width="3" height="3" fill="#ff0000"/>
<rect x="562" y="510" width="3" height="3" fill="#ff0000"/>
<rect x="553" y="298" width="3" height="3" fill="#008080"/>
<rect x="668" y="510" width="3" height="3" fill="#008080"/>
<rect x="659" y="298" width="3" height="3" fill="#00ff00"/>
<rect x="774" y="510" width="3" height="3" fill="#00ff00"/>
<rect x="761" y="298" width="3" height="3" fill="#ff0000"/>
<rect x="876" y="510" width="3" height="3" fill="#ff0000"/>
<rect x="871" y="298" width="3" height="3" fill="#0000ff"/>
<rect x="986" y="510" width="3" height="3" fill="#0000ff"/>
<rect x="977" y="298" width="3" height="3" fill="#808000"/>
<rect x="254" y="296" width="3" height="3" fill="#00ff00"/>
<rect x="249" y="512" width="3" height="3" fill="#0000ff"/>
<rect x="360" y="296" width="3" height="3" fill="#0000ff"/>
<rect x="355" y="512" width="3" height="3" fill="#800080"/>
<rect x="466" y="296" width="3" height="3" fill="#800080"/>
<rect x="461" y="512" width="3" height="3" fill="#ff0000"/>
<rect x="572" y="296" width="3" height="3" fill="#ff0000"/>
<rect x="567" y="512" width="3" height="3" fill="#800080"/>
<rect x="678" y="296" width="3" height="3" fill="#800080"/>
<rect x="673" y="512" width="3" height="3" fill="#00ff00"/>
<rect x="784" y="296" width="3" height="3" fill="#00ff00"/>
<rect x="779" y="512" width="3" height="3" fill="#ff0000"/>
<rect x="890" y="296" width="3" height="3" fill="#ff0000"/>
<rect x="885" y="512" width="3" height="3" fill="#0000ff"/>
<rect x="996" y="296" width="3" height="3" fill="#0000ff"/>
<rect x="991" y="512" width="3" height="3" fill="#800080"/>
<rect x="247" y="403" width="3" height="3" fill="#008080"/>
<rect x="256" y="512" width="3" height="3" fill="#ff0000"/>
<rect x="353" y="403" width="3" height="3" fill="#ff0000"/>
<rect x="362" y="512" width="3" height="3" fill="#0000ff"/>
<rect x="459" y="403" width="3" height="3" fill="#0000ff"/>
<rect x="468" y="512" width="3" height="3" fill="#008080"/>
<rect x="565" y="403" width="3" height="3" fill="#008080"/>
<rect x="574" y="512" width="3" height="3" fill="#ff0000"/>
<rect x="671" y="403" width="3" height="3" fill="#ff0000"/>
<rect x="680" y="512" width="3" height="3" fill="#008080"/>
<rect x="777" y="403" width="3" height="3" fill="#008080"/>
<rect x="786" y="512" width="3" height="3" fill="#00ff00"/>
<rect x="883" y="403" width="3" height="3" fill="#00ff00"/>
<rect x="892" y="512" width="3" height="3" fill="#ff0000"/>
<rect x="989" y="403" width="3" height="3" fill="#ff0000"/>
<rect x="998" y="512" width="3" height="3" fill="#0000ff"/>
<rect x="297" y="403" width="3" height="3" fill="#0000ff"/>
<rect x="302" y="512" width="3" height="3" fill="#808000"/>
<rect x="403" y="403" width="3" height="3" fill="#808000"/>
<rect x="408" y="512" width="3" height="3" fill="#800080"/>
<rect x="509" y="403" width="3" height="3" fill="#800080"/>
<rect x="514" y="512" width="3" height="3" fill="#0000ff"/>
<rect x="615" y="403" width="3" height="3" fill="#0000ff"/>
<rect x="620" y="512" width="3" height="3" fill="#ff0000"/>
<rect x="721" y="403" width="3" height="3" fill="#ff0000"/>
<rect x="726" y="512" width="3" height="3" fill="#ff0000"/>
<rect x="827" y="403" width="3" height="3" fill="#ff0000"/>
<rect x="832" y="512" width="3" height="3" fill="#0000ff"/>
<rect x="933" y="403" width="3" height="3" fill="#0000ff"/>
<rect x="938" y="512" width="3" height="3" fill="#0000ff"/>
<rect x="236" y="510" width="3" height="3" fill="#0000ff"/>
<rect x="242" y="405" width="3" height="3" fill="#800080"/>
<rect x="342" y="510" width="3" height="3" fill="#800080"/>
<rect x="348" y="405" width="3" height="3" fill="#ff0000"/>
<rect x="448" y="510" width="3" height="3" fill="#ff0000"/>
<rect x="454" y="405" width="3" height="3" fill="#800080"/>
<rect x="554" y="510" width="3" height="3" fill="#800080"/>
<rect x="560" y="405" width="3" height="3" fill="#00ff00"/>
<rect x="660" y="510" width="3" height="3" fill="#00ff00"/>
<rect x="666" y="405" width="3" height="3" fill="#ff0000"/>
<rect x="766" y="510" width="3" height="3" fill="#ff0000"/>
<rect x="772" y="405" width="3" height="3" fill="#0000ff"/>
<rect x="872" y="510" width="3" height="3" fill="#0000ff"/>
<rect x="878" y="405" width="3" height="3" fill="#800080"/>
<rect x="978" y="510" width="3" height="3" fill="#800080"/>
<rect x="984" y="405" width="3" height="3" fill="#0000ff"/>
<rect x="300" y="510" width="3" height="3" fill="#800080"/>
<rect x="306" y="405" width="3" height="3" fill="#808000"/>
<rect x="406" y="510" width="3" height="3" fill="#808000"/>
<rect x="412" y="405" width="3" height="3" fill="#ff0000"/>
<rect x="512" y="510" width="3" height="3" fill="#ff0000"/>
<rect x="518" y="405" width="3" height="3" fill="#ff0000"/>
<rect x="618" y="510" width="3" height="3" fill="#ff0000"/>
<rect x="624" y="405" width="3" height="3" fill="#0000ff"/>
<rect x="724" y="510" width="3" height="3" fill="#0000ff"/>
<rect x="730" y="405" width="3" height="3" fill="#0000ff"/>
<rect x="830" y="510" width="3" height="3" fill="#0000ff"/>
<rect x="836" y="405" width="3" height="3" fill="#800080"/>
<rect x="936" y="510" width="3" height="3" fill="#800080"/>
<rect x="942" y="405" width="3" height="3" fill="#0000ff"/>
</svg>
<!-- scrollbar -->
<div class="face" style="left:63px;top:675px;width:141px;height:16px"></div>
<div style="left:204px;top:675px;width:799px;height:16px;background:#dfdfdf;background-image:linear-gradient(45deg,#c0c0c0 25%,transparent 25%,transparent 75%,#c0c0c0 75%),linear-gradient(45deg,#c0c0c0 25%,transparent 25%,transparent 75%,#c0c0c0 75%);background-color:#fff;background-size:2px 2px;background-position:0 0,1px 1px"></div>
<div class="sb" style="left:204px"><svg style="left:5px;top:3px" width="4" height="7" viewBox="0 0 4 7"><polygon points="4,0 4,7 0,3.5" fill="#000"/></svg></div>
<div class="sb" style="left:985px;width:18px"><svg style="left:6px;top:3px" width="4" height="7" viewBox="0 0 4 7"><polygon points="0,0 0,7 4,3.5" fill="#000"/></svg></div>
<div class="sb" style="left:551px;width:119px"></div>

<!-- dropdown menu -->
<div style="left:100px;top:41px;width:210px;height:106px;background:#000"></div>
<div style="left:100px;top:41px;width:209px;height:105px;background:#808080"></div>
<div class="face" style="left:100px;top:41px;width:208px;height:104px"></div>
<div style="left:100px;top:41px;width:207px;height:1px;background:#f0f0f0"></div>
<div style="left:100px;top:41px;width:1px;height:103px;background:#f0f0f0"></div>
<div style="left:101px;top:42px;width:205px;height:1px;background:#fff"></div>
<div style="left:101px;top:42px;width:1px;height:101px;background:#fff"></div>
<div class="navy" style="left:103px;top:104px;width:204px;height:20px"></div>
<div class="dd" style="top:44px;letter-spacing:0.6px"><u>T</u>ext</div>
<div class="dd" style="top:64px;letter-spacing:0.05px"><span style="position:static;display:inline;word-spacing:-1px">Gantt chart - </span><u>O</u>ptimal sort</div>
<div class="dd" style="top:84px;letter-spacing:0.1px"><span style="position:static;display:inline;word-spacing:-1px">Gantt chart - </span><u>D</u>eparture sort</div>
<div class="dd" style="top:104px;color:#fff"><u>L</u>ines chart</div>
<div class="dd" style="top:124px"><u>S</u>ource file</div>
</body></html>
